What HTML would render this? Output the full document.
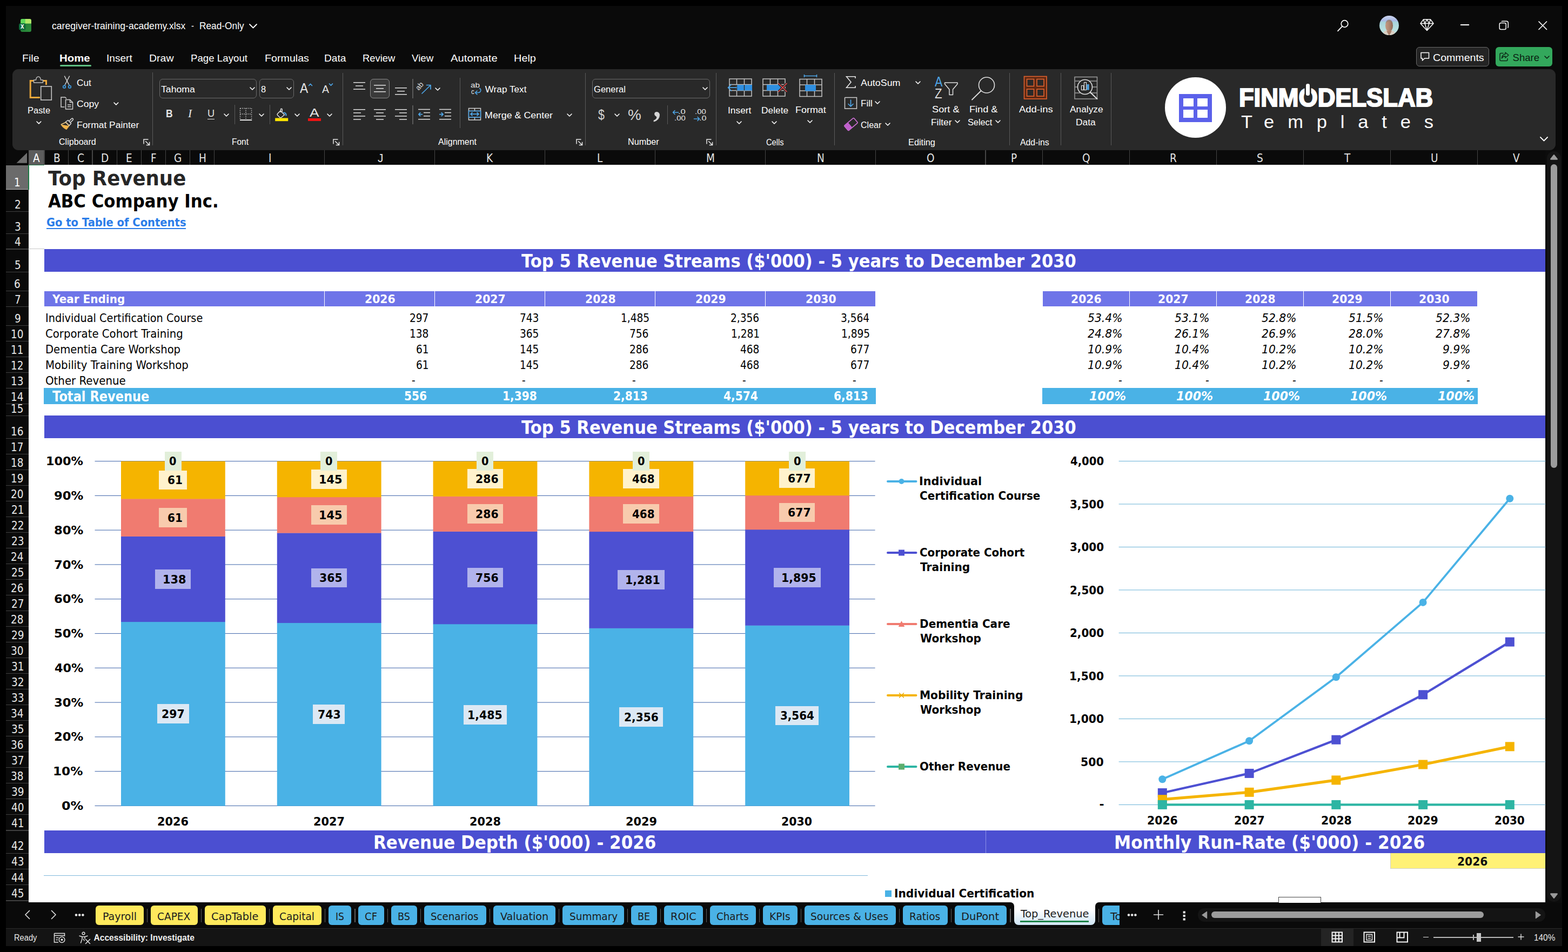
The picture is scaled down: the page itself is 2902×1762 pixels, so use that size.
<!DOCTYPE html>
<html lang="en"><head><meta charset="utf-8"><title>caregiver-training-academy.xlsx - Excel</title>
<style>
html,body{margin:0;padding:0;background:#000;}
body{width:2902px;height:1762px;position:relative;font-family:"Liberation Sans",sans-serif;}
#app div,#app svg,#app span.t{position:absolute;}
#app{position:absolute;left:0;top:0;width:2902px;height:1762px;overflow:hidden;}
span.t{white-space:pre;line-height:1;transform-origin:0 0;display:block;}
span.tah{font-family:"DejaVu Sans Condensed","DejaVu Sans","Liberation Sans",sans-serif;}
span.serif{font-family:"Liberation Serif",serif;}
span.tahb{font-family:"DejaVu Sans","Liberation Sans",sans-serif;}
</style></head>
<body><div id="app">
<div style="left:11px;top:11px;width:2880px;height:1740px;background:#0a0a0a;"></div>
<svg style="left:34px;top:34px;" width="26" height="26" viewBox="0 0 26 26">
<defs><linearGradient id="xg" x1="0" y1="0" x2="1" y2="1"><stop offset="0" stop-color="#1c7a30"/><stop offset="1" stop-color="#2f8f3e"/></linearGradient>
<clipPath id="xc"><rect x="4.1" y="1" width="19.8" height="24" rx="3"/></clipPath></defs>
<g clip-path="url(#xc)"><rect x="4" y="1" width="20" height="24" fill="url(#xg)"/>
<rect x="4" y="1" width="9" height="8.6" fill="#5ed85a"/><rect x="12.8" y="1" width="11.2" height="8.6" fill="#b4e869"/></g>
<rect x="1" y="9.2" width="12.6" height="12.6" rx="3" fill="#0e6b3d"/></svg>
<span class="t" style="left:38.40px;top:41.00px;font-size:14.2px;color:#fff;font-weight:bold;transform:scaleX(0.8250);">x</span>
<span class="t" style="left:96.00px;top:40.00px;font-size:17.8px;color:#fff;transform:scaleX(0.9904);">caregiver-training-academy.xlsx</span>
<span class="t" style="left:354.20px;top:40.00px;font-size:17.8px;color:#fff;transform:scaleX(0.8333);">-</span>
<span class="t" style="left:369.33px;top:40.00px;font-size:17.8px;color:#fff;transform:scaleX(0.9727);">Read-Only</span>
<svg style="left:459.5px;top:43.25px;" width="17" height="10.5" viewBox="0 0 17 10.5"><path d="M2 2 L8.5 8.5 L15 2" fill="none" stroke="#fff" stroke-width="1.8" stroke-linecap="round" stroke-linejoin="round"/></svg>
<svg style="left:2473px;top:34px;" width="26" height="26" viewBox="0 0 26 26"><circle cx="15.5" cy="10" r="6.3" fill="none" stroke="#fff" stroke-width="1.7"/><path d="M11 14.8L3 23.3" stroke="#fff" stroke-width="1.8" stroke-linecap="round"/></svg>
<svg style="left:2552px;top:28px;" width="38" height="38" viewBox="0 0 38 38"><defs><clipPath id="av"><circle cx="19" cy="19" r="18"/></clipPath>
<linearGradient id="sky" x1="0" y1="0" x2="0" y2="1"><stop offset="0" stop-color="#cfd6ee"/><stop offset="0.28" stop-color="#a9b9e6"/><stop offset="0.33" stop-color="#a7d3dc"/><stop offset="1" stop-color="#c4e8e2"/></linearGradient>
<linearGradient id="fc" x1="0" y1="0" x2="1" y2="0"><stop offset="0" stop-color="#c49a84"/><stop offset="0.5" stop-color="#b08670"/><stop offset="1" stop-color="#8c6a5a"/></linearGradient></defs>
<g clip-path="url(#av)"><rect width="38" height="38" fill="url(#sky)"/>
<path d="M6 38L10 30Q13 27.5 19 27.5Q25 27.5 28 30L32 38Z" fill="#d9d0c4"/>
<path d="M14 29L19 38L24 29Q19 31 14 29Z" fill="#a8806c"/>
<ellipse cx="19" cy="19.5" rx="7" ry="10.8" fill="url(#fc)"/>
<path d="M12.3 16Q13 8.2 19 8.2Q25 8.2 25.7 16Q23 11.5 19 11.5Q15 11.5 12.3 16Z" fill="#8a7f7c" opacity="0.55"/></g></svg>
<svg style="left:2627px;top:34px;" width="28" height="25" viewBox="0 0 28 25"><path d="M7.5 2H20.5L26 9.5L14 22.5L2 9.5Z M2 9.5H26 M10 9.5L14 22 M18 9.5L14 22 M7.5 2L10 9.5L14 2L18 9.5L20.5 2" fill="none" stroke="#fff" stroke-width="1.5" stroke-linejoin="round"/></svg>
<div style="left:2703px;top:45.3px;width:16px;height:1.6px;background:#fff;"></div>
<svg style="left:2773px;top:37px;" width="21" height="21" viewBox="0 0 21 21"><rect x="2.2" y="5.5" width="12" height="12" rx="2.5" fill="none" stroke="#fff" stroke-width="1.5"/><path d="M6 3.2Q6.5 2.2 8 2.2H15Q18.3 2.2 18.3 5.5V12.5Q18.3 14 17.3 14.5" fill="none" stroke="#fff" stroke-width="1.5"/></svg>
<svg style="left:2845px;top:37px;" width="20" height="20" viewBox="0 0 20 20"><path d="M3 3L17.5 17.5M17.5 3L3 17.5" stroke="#fff" stroke-width="1.7" stroke-linecap="round"/></svg>
<span class="t" style="left:40.97px;top:98.00px;font-size:19px;color:#fff;transform:scaleX(1.0328);">File</span>
<span class="t" style="left:197.49px;top:98.00px;font-size:19px;color:#fff;transform:scaleX(1.0055);">Insert</span>
<span class="t" style="left:276.37px;top:98.00px;font-size:19px;color:#fff;transform:scaleX(1.0272);">Draw</span>
<span class="t" style="left:352.52px;top:98.00px;font-size:19px;color:#fff;transform:scaleX(0.9838);">Page Layout</span>
<span class="t" style="left:489.97px;top:98.00px;font-size:19px;color:#fff;transform:scaleX(1.0350);">Formulas</span>
<span class="t" style="left:599.59px;top:98.00px;font-size:19px;color:#fff;transform:scaleX(1.0059);">Data</span>
<span class="t" style="left:670.73px;top:98.00px;font-size:19px;color:#fff;transform:scaleX(0.9679);">Review</span>
<span class="t" style="left:762.20px;top:98.00px;font-size:19px;color:#fff;transform:scaleX(0.9874);">View</span>
<span class="t" style="left:834.40px;top:98.00px;font-size:19px;color:#fff;transform:scaleX(1.0661);">Automate</span>
<span class="t" style="left:950.65px;top:98.00px;font-size:19px;color:#fff;transform:scaleX(1.0477);">Help</span>
<span class="t" style="left:110.33px;top:98.00px;font-size:19px;color:#fff;font-weight:bold;transform:scaleX(1.0738);">Home</span>
<div style="left:111px;top:119.7px;width:58px;height:3.4px;background:#5fbf82;border-radius:2px;"></div>
<div style="left:2621px;top:87px;width:135px;height:35.8px;background:#242424;border:1.3px solid #6a6a6a;border-radius:6px;box-sizing:border-box;"></div>
<svg style="left:2627px;top:95px;" width="22" height="20" viewBox="0 0 22 20"><path d="M3 2.5H17.5V13H9.5L5.5 17V13H3Z" fill="none" stroke="#fff" stroke-width="1.5" stroke-linejoin="round"/></svg>
<span class="t" style="left:2652.30px;top:98.00px;font-size:18.5px;color:#fff;transform:scaleX(1.0584);">Comments</span>
<div style="left:2768.2px;top:87px;width:105px;height:35.8px;background:#33a85c;border-radius:6px;"></div>
<svg style="left:2773px;top:94px;" width="22" height="22" viewBox="0 0 22 22"><path d="M9 4.5H5Q3 4.5 3 6.5V16.5Q3 18.5 5 18.5H15Q17 18.5 17 16.5V14.5" fill="none" stroke="#0d2b17" stroke-width="1.5" stroke-linecap="round"/><path d="M13 3L19 8L13 13V10Q8.5 10 6.5 14Q7 7 13 6Z" fill="none" stroke="#0d2b17" stroke-width="1.5" stroke-linejoin="round"/></svg>
<span class="t" style="left:2799.60px;top:98.00px;font-size:18.5px;color:#0a1f11;">Share</span>
<svg style="left:2856.5px;top:101.5px;" width="12" height="8" viewBox="0 0 12 8"><path d="M2 2 L6 6 L10 2" fill="none" stroke="#0a1f11" stroke-width="1.6" stroke-linecap="round" stroke-linejoin="round"/></svg>
<div style="left:23.3px;top:128px;width:2855.7px;height:149.8px;background:#292929;border-radius:11px;"></div>
<svg style="left:53px;top:143px;overflow:visible;" width="45" height="45" viewBox="0 0 45 45">
<path d="M10 6.5H3.2V37.5H21" fill="none" stroke="#eaa73a" stroke-width="3"/>
<path d="M26 6.5H32.5V14" fill="none" stroke="#eaa73a" stroke-width="3"/>
<path d="M9.5 10V5H13.6Q14 -1 18 -1Q22 -1 22.4 5H26.5V10Z" fill="#292929" stroke="#bdbdbd" stroke-width="1.4" stroke-linejoin="round"/>
<rect x="22.7" y="17" width="19.6" height="25" fill="#292929" stroke="#c8c8c8" stroke-width="1.6"/></svg>
<span class="t" style="left:50.74px;top:196.00px;font-size:17.2px;color:#fff;transform:scaleX(0.9577);">Paste</span>
<svg style="left:65.6px;top:222.55px;" width="11.8" height="7.9" viewBox="0 0 11.8 7.9"><path d="M2 2 L5.9 5.9 L9.8 2" fill="none" stroke="#fff" stroke-width="1.6" stroke-linecap="round" stroke-linejoin="round"/></svg>
<svg style="left:113px;top:139px;" width="22" height="27" viewBox="0 0 22 27"><path d="M6.5 2L14.5 17.5 M15.5 2L7.5 17.5" stroke="#e0e0e0" stroke-width="1.4" fill="none" stroke-linecap="round"/>
<circle cx="6" cy="21.7" r="2.3" fill="none" stroke="#3f9be0" stroke-width="1.7"/><circle cx="16" cy="21.7" r="2.3" fill="none" stroke="#3f9be0" stroke-width="1.7"/>
<path d="M7.5 17.5L6.6 19.2M14.5 17.5L15.4 19.2" stroke="#4ea6e8" stroke-width="1.4"/></svg>
<span class="t" style="left:142.00px;top:145.00px;font-size:17.2px;color:#fff;">Cut</span>
<svg style="left:111px;top:178px;" width="26" height="26" viewBox="0 0 26 26"><path d="M8.5 20H2V2H9.5L12 4.5" fill="none" stroke="#d0d0d0" stroke-width="1.5"/>
<path d="M10.5 6.5H18.5L23.5 11.5V24H10.5Z" fill="#292929" stroke="#d0d0d0" stroke-width="1.5" stroke-linejoin="round"/>
<path d="M18.5 6.5V11.5H23.5 M14 16H20.5 M14 19.5H20.5" fill="none" stroke="#d0d0d0" stroke-width="1.4"/></svg>
<span class="t" style="left:142.00px;top:184.00px;font-size:17.2px;color:#fff;transform:scaleX(1.0264);">Copy</span>
<svg style="left:209.4px;top:187.65px;" width="11.8" height="7.9" viewBox="0 0 11.8 7.9"><path d="M2 2 L5.9 5.9 L9.8 2" fill="none" stroke="#fff" stroke-width="1.6" stroke-linecap="round" stroke-linejoin="round"/></svg>
<svg style="left:111px;top:217px;" width="26" height="24" viewBox="0 0 26 24"><path d="M17 7L21.5 2.5Q23 1.5 24 2.7Q25 4 23.8 5.2L19.5 9.5" fill="none" stroke="#e0e0e0" stroke-width="1.5"/>
<path d="M10.5 8.5L15 5.5L20.5 11.5L17 15.5Z" fill="none" stroke="#e0e0e0" stroke-width="1.5" stroke-linejoin="round"/>
<path d="M2 13.5L10.5 9.5L17 16L12 22.5Q6 20 2 13.5Z" fill="#f0b44a" stroke="#f0b44a" stroke-width="1.2" stroke-linejoin="round"/>
<path d="M2 13.5L10.5 9.5L17 16" fill="#292929" stroke="#e8c88a" stroke-width="1.4" stroke-linejoin="round"/></svg>
<span class="t" style="left:141.69px;top:223.00px;font-size:17.2px;color:#fff;transform:scaleX(1.0147);">Format Painter</span>
<span class="t" style="left:109.20px;top:254.00px;font-size:16.2px;color:#fff;transform:scaleX(0.9929);">Clipboard</span>
<svg style="left:264.8px;top:256.5px;" width="13" height="13" viewBox="0 0 13 13"><path d="M1 9.5V1H9.5 M4.2 4.2L11 11 M5.8 11.6H11.6V5.8" fill="none" stroke="#e8e8e8" stroke-width="1.5"/></svg>
<div style="left:282px;top:134px;width:1.3px;height:134.7px;background:#5a5a5a;"></div>
<div style="left:295.3px;top:145.9px;width:180.1px;height:35.9px;background:#292929;border:1.3px solid #6b6b6b;border-radius:6px;box-sizing:border-box;"></div>
<span class="t" style="left:298.30px;top:157.00px;font-size:17.2px;color:#fff;transform:scaleX(1.0278);">Tahoma</span>
<svg style="left:461px;top:160px;" width="12" height="8" viewBox="0 0 12 8"><path d="M2 2 L6 6 L10 2" fill="none" stroke="#fff" stroke-width="1.6" stroke-linecap="round" stroke-linejoin="round"/></svg>
<div style="left:479.7px;top:145.9px;width:64.1px;height:35.9px;background:#292929;border:1.3px solid #6b6b6b;border-radius:6px;box-sizing:border-box;"></div>
<span class="t" style="left:483.20px;top:157.00px;font-size:17.2px;color:#fff;transform:scaleX(0.9556);">8</span>
<svg style="left:529px;top:160px;" width="12" height="8" viewBox="0 0 12 8"><path d="M2 2 L6 6 L10 2" fill="none" stroke="#fff" stroke-width="1.6" stroke-linecap="round" stroke-linejoin="round"/></svg>
<span class="t" style="left:555.00px;top:151.00px;font-size:25px;color:#e6e6e6;transform:scaleX(0.9118);">A</span>
<svg style="left:569.5px;top:152.5px;" width="10" height="8" viewBox="0 0 10 8"><path d="M1.5 5.5L4.5 2.3L7.5 5.5" fill="none" stroke="#4ea6e8" stroke-width="1.7" stroke-linecap="round" stroke-linejoin="round"/></svg>
<span class="t" style="left:596.00px;top:154.00px;font-size:21px;color:#e6e6e6;transform:scaleX(0.9286);">A</span>
<svg style="left:608px;top:153px;" width="10" height="8" viewBox="0 0 10 8"><path d="M1.5 2L4.5 5.2L7.5 2" fill="none" stroke="#4ea6e8" stroke-width="1.7" stroke-linecap="round" stroke-linejoin="round"/></svg>
<span class="t" style="left:306.72px;top:200.00px;font-size:20px;color:#e6e6e6;font-weight:bold;transform:scaleX(0.8769);">B</span>
<span class="t serif" style="left:348.06px;top:200.00px;font-size:20.5px;color:#e6e6e6;font-style:italic;transform:scaleX(1.0556);">I</span>
<span class="t" style="left:383.54px;top:200.00px;font-size:19px;color:#e6e6e6;transform:scaleX(0.9583);">U</span>
<div style="left:383.5px;top:219.6px;width:13.5px;height:1.5px;background:#e6e6e6;"></div>
<svg style="left:413.3px;top:209.2px;" width="12" height="8" viewBox="0 0 12 8"><path d="M2 2 L6 6 L10 2" fill="none" stroke="#fff" stroke-width="1.6" stroke-linecap="round" stroke-linejoin="round"/></svg>
<div style="left:433.8px;top:194px;width:1.3px;height:36px;background:#5a5a5a;"></div>
<svg style="left:443px;top:199px;" width="25" height="25" viewBox="0 0 25 25"><path d="M1.5 1.5H22.5 M1.5 1.5V22 M22.5 1.5V22 M12 1.5V22 M1.5 12H22.5" fill="none" stroke="#c8c8c8" stroke-width="1.5" stroke-dasharray="1.6 1.9"/>
<path d="M1 23.2H23.2" stroke="#fff" stroke-width="1.8"/></svg>
<svg style="left:478.3px;top:209.2px;" width="12" height="8" viewBox="0 0 12 8"><path d="M2 2 L6 6 L10 2" fill="none" stroke="#fff" stroke-width="1.6" stroke-linecap="round" stroke-linejoin="round"/></svg>
<div style="left:498.7px;top:194px;width:1.3px;height:36px;background:#5a5a5a;"></div>
<svg style="left:508px;top:199px;" width="27" height="26" viewBox="0 0 27 26"><path d="M11 6L18.5 13.5L12.5 18.5Q11 19.3 9.8 18.3L5.5 14Q4.6 12.8 5.6 11.6Z" fill="none" stroke="#e0e0e0" stroke-width="1.5" stroke-linejoin="round"/>
<path d="M11.5 9V3Q12.8 1.5 14.2 3V8" fill="none" stroke="#e0e0e0" stroke-width="1.4"/>
<path d="M17 9.5Q21.5 9.5 21.5 14.5" fill="none" stroke="#4ea6e8" stroke-width="2.2" stroke-linecap="round"/>
<rect x="1.2" y="19.5" width="24" height="5.7" fill="#ffe600"/></svg>
<svg style="left:543.5px;top:209.2px;" width="12" height="8" viewBox="0 0 12 8"><path d="M2 2 L6 6 L10 2" fill="none" stroke="#fff" stroke-width="1.6" stroke-linecap="round" stroke-linejoin="round"/></svg>
<span class="t" style="left:573.20px;top:198.00px;font-size:22px;color:#e6e6e6;transform:scaleX(1.2000);">A</span>
<div style="left:570px;top:218.5px;width:24px;height:5.7px;background:#f01414;"></div>
<svg style="left:604.3px;top:209.2px;" width="12" height="8" viewBox="0 0 12 8"><path d="M2 2 L6 6 L10 2" fill="none" stroke="#fff" stroke-width="1.6" stroke-linecap="round" stroke-linejoin="round"/></svg>
<span class="t" style="left:429.04px;top:254.00px;font-size:16.2px;color:#fff;transform:scaleX(0.9594);">Font</span>
<svg style="left:616px;top:256.5px;" width="13" height="13" viewBox="0 0 13 13"><path d="M1 9.5V1H9.5 M4.2 4.2L11 11 M5.8 11.6H11.6V5.8" fill="none" stroke="#e8e8e8" stroke-width="1.5"/></svg>
<div style="left:633.5px;top:135px;width:1.3px;height:133.7px;background:#5a5a5a;"></div>
<svg style="left:653.8px;top:152.1px;" width="22" height="20.6" viewBox="0 0 22 20.6"><rect x="0" y="0" width="22" height="1.5" fill="#e0e0e0"/><rect x="4" y="6.2" width="14" height="1.5" fill="#e0e0e0"/><rect x="0" y="12.4" width="22" height="1.5" fill="#e0e0e0"/></svg>
<div style="left:685px;top:146px;width:36px;height:35.5px;background:#3a3a3a;border:1.3px solid #8a8a8a;border-radius:6px;box-sizing:border-box;"></div>
<svg style="left:692.3px;top:156.8px;" width="22" height="20" viewBox="0 0 22 20"><rect x="0" y="0" width="22" height="1.5" fill="#e0e0e0"/><rect x="4" y="6" width="14" height="1.5" fill="#e0e0e0"/><rect x="0" y="12" width="22" height="1.5" fill="#e0e0e0"/></svg>
<svg style="left:730.8px;top:162.4px;" width="22" height="20" viewBox="0 0 22 20"><rect x="0" y="0" width="22" height="1.5" fill="#e0e0e0"/><rect x="4" y="6" width="14" height="1.5" fill="#e0e0e0"/><rect x="0" y="12" width="22" height="1.5" fill="#e0e0e0"/></svg>
<div style="left:763.3px;top:146px;width:1.3px;height:35.5px;background:#5a5a5a;"></div>
<svg style="left:771px;top:150px;" width="28" height="26" viewBox="0 0 28 26"><path d="M10 23L25.5 8 M18.5 7.5H26V15" fill="none" stroke="#4ea6e8" stroke-width="1.7" stroke-linecap="round" stroke-linejoin="round"/></svg>
<span class="t" style="left:774.50px;top:157.00px;font-size:13.5px;color:#e0e0e0;transform-origin:0 11.0px;transform:rotate(-50deg) scaleX(0.9994);">ab</span>
<svg style="left:804px;top:160.5px;" width="12" height="8" viewBox="0 0 12 8"><path d="M2 2 L6 6 L10 2" fill="none" stroke="#fff" stroke-width="1.6" stroke-linecap="round" stroke-linejoin="round"/></svg>
<svg style="left:653.8px;top:201.8px;" width="22" height="26.4" viewBox="0 0 22 26.4"><rect x="0" y="0" width="22" height="1.5" fill="#e0e0e0"/><rect x="0" y="6.1" width="14" height="1.5" fill="#e0e0e0"/><rect x="0" y="12.2" width="22" height="1.5" fill="#e0e0e0"/><rect x="0" y="18.3" width="14" height="1.5" fill="#e0e0e0"/></svg>
<svg style="left:692.3px;top:201.8px;" width="22" height="26.4" viewBox="0 0 22 26.4"><rect x="0" y="0" width="22" height="1.5" fill="#e0e0e0"/><rect x="4" y="6.1" width="14" height="1.5" fill="#e0e0e0"/><rect x="0" y="12.2" width="22" height="1.5" fill="#e0e0e0"/><rect x="4" y="18.3" width="14" height="1.5" fill="#e0e0e0"/></svg>
<svg style="left:730.8px;top:201.8px;" width="22" height="26.4" viewBox="0 0 22 26.4"><rect x="0" y="0" width="22" height="1.5" fill="#e0e0e0"/><rect x="8" y="6.1" width="14" height="1.5" fill="#e0e0e0"/><rect x="0" y="12.2" width="22" height="1.5" fill="#e0e0e0"/><rect x="8" y="18.3" width="14" height="1.5" fill="#e0e0e0"/></svg>
<div style="left:763.3px;top:194.5px;width:1.3px;height:35px;background:#5a5a5a;"></div>
<svg style="left:773.5px;top:201px;" width="23" height="22" viewBox="0 0 23 22"><path d="M0 1.5H22 M10 7.6H22 M10 13.7H22 M0 19.8H22" stroke="#e0e0e0" stroke-width="1.5"/><path d="M7.5 10.6H1M3.8 7.6L0.8 10.6L3.8 13.6" fill="none" stroke="#4ea6e8" stroke-width="1.6" stroke-linecap="round" stroke-linejoin="round"/></svg>
<svg style="left:812.5px;top:201px;" width="23" height="22" viewBox="0 0 23 22"><path d="M0 1.5H22 M10 7.6H22 M10 13.7H22 M0 19.8H22" stroke="#e0e0e0" stroke-width="1.5"/><path d="M0.5 10.6H7M4.2 7.6L7.2 10.6L4.2 13.6" fill="none" stroke="#4ea6e8" stroke-width="1.6" stroke-linecap="round" stroke-linejoin="round"/></svg>
<div style="left:851px;top:144px;width:1.3px;height:93.4px;background:#5a5a5a;"></div>
<span class="t" style="left:871.00px;top:151.00px;font-size:13.5px;color:#e8e8e8;transform:scaleX(1.1373);">ab</span>
<span class="t" style="left:871.50px;top:163.00px;font-size:13.5px;color:#e8e8e8;transform:scaleX(0.8571);">c</span>
<svg style="left:877px;top:162px;" width="16" height="15" viewBox="0 0 16 15"><path d="M10.5 1.5Q13.5 3 12.5 6.5Q11.5 9.5 7.5 9.5H3 M6 6.2L2.5 9.5L6 12.8" fill="none" stroke="#4ea6e8" stroke-width="1.6" stroke-linecap="round" stroke-linejoin="round"/></svg>
<span class="t" style="left:897.70px;top:157.00px;font-size:17.2px;color:#fff;">Wrap Text</span>
<svg style="left:865.5px;top:199px;" width="26" height="25" viewBox="0 0 26 25"><path d="M1.5 1.5H23.5V23H1.5Z M1.5 6.5H23.5 M1.5 18H23.5 M12.5 1.5V6.5 M12.5 18V23" fill="none" stroke="#d0d0d0" stroke-width="1.5"/>
<rect x="1.5" y="6.5" width="22" height="11.5" fill="#292929" stroke="#4ea6e8" stroke-width="1.6"/>
<path d="M5 12.2H20 M8 9.4L5 12.2L8 15 M17 9.4L20 12.2L17 15" fill="none" stroke="#4ea6e8" stroke-width="1.7" stroke-linecap="round" stroke-linejoin="round"/></svg>
<span class="t" style="left:896.66px;top:205.00px;font-size:17.2px;color:#fff;transform:scaleX(1.0390);">Merge &amp; Center</span>
<svg style="left:1048px;top:209.2px;" width="12" height="8" viewBox="0 0 12 8"><path d="M2 2 L6 6 L10 2" fill="none" stroke="#fff" stroke-width="1.6" stroke-linecap="round" stroke-linejoin="round"/></svg>
<span class="t" style="left:810.50px;top:254.00px;font-size:16.2px;color:#fff;transform:scaleX(0.9864);">Alignment</span>
<svg style="left:1065.7px;top:256.5px;" width="13" height="13" viewBox="0 0 13 13"><path d="M1 9.5V1H9.5 M4.2 4.2L11 11 M5.8 11.6H11.6V5.8" fill="none" stroke="#e8e8e8" stroke-width="1.5"/></svg>
<div style="left:1082.7px;top:135px;width:1.3px;height:133.7px;background:#5a5a5a;"></div>
<div style="left:1096.2px;top:145.9px;width:217.5px;height:35.9px;background:#292929;border:1.3px solid #6b6b6b;border-radius:6px;box-sizing:border-box;"></div>
<span class="t" style="left:1099.40px;top:157.00px;font-size:17.2px;color:#fff;transform:scaleX(0.9631);">General</span>
<svg style="left:1299px;top:160px;" width="12" height="8" viewBox="0 0 12 8"><path d="M2 2 L6 6 L10 2" fill="none" stroke="#fff" stroke-width="1.6" stroke-linecap="round" stroke-linejoin="round"/></svg>
<span class="t" style="left:1107.20px;top:199.00px;font-size:26.5px;color:#d6d6d6;transform:scaleX(0.8067);">$</span>
<svg style="left:1135.5px;top:209.2px;" width="12" height="8" viewBox="0 0 12 8"><path d="M2 2 L6 6 L10 2" fill="none" stroke="#fff" stroke-width="1.6" stroke-linecap="round" stroke-linejoin="round"/></svg>
<span class="t" style="left:1162.40px;top:199.00px;font-size:28px;color:#d6d6d6;transform:scaleX(0.9957);">%</span>
<span class="t serif" style="left:1208.60px;top:164.00px;font-size:62px;color:#d6d6d6;font-weight:bold;transform:scaleX(0.9143);">,</span>
<div style="left:1234.9px;top:194.5px;width:1.3px;height:35px;background:#5a5a5a;"></div>
<span class="t" style="left:1254.77px;top:200.00px;font-size:13.5px;color:#e6e6e6;transform:scaleX(1.2307);">.0</span>
<span class="t" style="left:1247.90px;top:212.00px;font-size:13.5px;color:#e6e6e6;transform:scaleX(1.1009);">.00</span>
<svg style="left:1244px;top:202.5px;" width="13" height="10" viewBox="0 0 13 10"><path d="M11.5 5H1.5M5 1.5L1.5 5L5 8.5" fill="none" stroke="#4ea6e8" stroke-width="1.6" stroke-linecap="round" stroke-linejoin="round"/></svg>
<span class="t" style="left:1286.40px;top:200.00px;font-size:13.5px;color:#e6e6e6;transform:scaleX(1.1009);">.00</span>
<span class="t" style="left:1294.30px;top:212.00px;font-size:13.5px;color:#e6e6e6;transform:scaleX(1.1999);">.0</span>
<svg style="left:1283px;top:214.5px;" width="13" height="10" viewBox="0 0 13 10"><path d="M1.5 5H11.5M8 1.5L11.5 5L8 8.5" fill="none" stroke="#4ea6e8" stroke-width="1.6" stroke-linecap="round" stroke-linejoin="round"/></svg>
<span class="t" style="left:1162.00px;top:254.00px;font-size:16.2px;color:#fff;">Number</span>
<svg style="left:1307px;top:256.5px;" width="13" height="13" viewBox="0 0 13 13"><path d="M1 9.5V1H9.5 M4.2 4.2L11 11 M5.8 11.6H11.6V5.8" fill="none" stroke="#e8e8e8" stroke-width="1.5"/></svg>
<div style="left:1325px;top:135px;width:1.3px;height:133.7px;background:#5a5a5a;"></div>
<svg style="left:1346px;top:144.5px;" width="48" height="35" viewBox="0 0 48 35"><g transform="translate(3,0)"><path d="M1 1H42V33H1Z M1 11.5H42 M1 22.5H42 M14.5 1V33 M28.5 1V33" fill="none" stroke="#c4c4c4" stroke-width="1.5"/></g>
<rect x="17" y="12" width="29" height="10.5" fill="#2f8fe0"/><path d="M17.5 12V22.5M31.5 12V22.5" stroke="#292929" stroke-width="1.3"/>
<path d="M17 17.2H2 M7.5 11.5L1.5 17.2L7.5 23" fill="none" stroke="#4ea6e8" stroke-width="1.7" stroke-linecap="round" stroke-linejoin="round"/></svg>
<span class="t" style="left:1346.79px;top:196.00px;font-size:17.2px;color:#fff;transform:scaleX(1.0092);">Insert</span>
<svg style="left:1362.3px;top:222.5px;" width="12" height="8" viewBox="0 0 12 8"><path d="M2 2 L6 6 L10 2" fill="none" stroke="#fff" stroke-width="1.6" stroke-linecap="round" stroke-linejoin="round"/></svg>
<svg style="left:1411px;top:144.5px;" width="48" height="35" viewBox="0 0 48 35"><g transform="translate(0,0)"><path d="M1 1H42V33H1Z M1 11.5H42 M1 22.5H42 M14.5 1V33 M28.5 1V33" fill="none" stroke="#c4c4c4" stroke-width="1.5"/></g>
<rect x="8" y="12" width="26" height="10.5" fill="#2f8fe0"/>
<path d="M30 9.5L45 24.5M45 9.5L30 24.5" stroke="#292929" stroke-width="4.5"/><path d="M30 9.5L45 24.5M45 9.5L30 24.5" stroke="#e8484a" stroke-width="1.7" stroke-linecap="round"/></svg>
<span class="t" style="left:1408.99px;top:196.00px;font-size:17.2px;color:#fff;transform:scaleX(1.0099);">Delete</span>
<svg style="left:1427.3px;top:222.5px;" width="12" height="8" viewBox="0 0 12 8"><path d="M2 2 L6 6 L10 2" fill="none" stroke="#fff" stroke-width="1.6" stroke-linecap="round" stroke-linejoin="round"/></svg>
<svg style="left:1478px;top:137px;" width="46" height="43" viewBox="0 0 46 43"><g transform="translate(1,8.5)"><path d="M1 1H42V33H1Z M1 11.5H42 M1 22.5H42 M14.5 1V33 M28.5 1V33" fill="none" stroke="#c4c4c4" stroke-width="1.5"/></g>
<rect x="12" y="20" width="20" height="11.5" fill="#2f8fe0"/>
<path d="M10.5 3.5H33.5 M10.5 1V6 M33.5 1V6" stroke="#4ea6e8" stroke-width="1.6" fill="none"/></svg>
<span class="t" style="left:1471.76px;top:195.00px;font-size:17.2px;color:#fff;transform:scaleX(1.0437);">Format</span>
<svg style="left:1493.2px;top:221px;" width="12" height="8" viewBox="0 0 12 8"><path d="M2 2 L6 6 L10 2" fill="none" stroke="#fff" stroke-width="1.6" stroke-linecap="round" stroke-linejoin="round"/></svg>
<span class="t" style="left:1418.00px;top:255.00px;font-size:16.2px;color:#fff;transform:scaleX(0.9057);">Cells</span>
<div style="left:1544.1px;top:135px;width:1.3px;height:133.7px;background:#5a5a5a;"></div>
<svg style="left:1564px;top:140px;" width="22" height="25" viewBox="0 0 22 25"><path d="M19 5V1.8H2.5L11 12L2.5 22.3H19V19" fill="none" stroke="#e6e6e6" stroke-width="1.6" stroke-linejoin="miter"/></svg>
<span class="t" style="left:1593.30px;top:145.00px;font-size:17.2px;color:#fff;transform:scaleX(1.0387);">AutoSum</span>
<svg style="left:1693px;top:149px;" width="12" height="8" viewBox="0 0 12 8"><path d="M2 2 L6 6 L10 2" fill="none" stroke="#fff" stroke-width="1.6" stroke-linecap="round" stroke-linejoin="round"/></svg>
<svg style="left:1562px;top:179px;" width="26" height="24" viewBox="0 0 26 24"><path d="M1.5 8V22H23.5V8 M1.5 1.5H23.5V22" fill="none" stroke="#d0d0d0" stroke-width="1.5"/><path d="M1.5 1.5V8" stroke="#d0d0d0" stroke-width="1.5"/><path d="M12.5 6V17.5M8 13.5L12.5 18L17 13.5" fill="none" stroke="#4ea6e8" stroke-width="1.7" stroke-linecap="round" stroke-linejoin="round"/></svg>
<span class="t" style="left:1592.71px;top:183.00px;font-size:17.2px;color:#fff;transform:scaleX(0.9883);">Fill</span>
<svg style="left:1618.3px;top:186.4px;" width="12" height="8" viewBox="0 0 12 8"><path d="M2 2 L6 6 L10 2" fill="none" stroke="#fff" stroke-width="1.6" stroke-linecap="round" stroke-linejoin="round"/></svg>
<svg style="left:1562px;top:217px;" width="26" height="26" viewBox="0 0 26 26"><g transform="rotate(-40 13 13)"><rect x="1.5" y="7" width="23" height="12" rx="1.5" fill="none" stroke="#d070d8" stroke-width="1.6"/><rect x="1.5" y="7" width="9.5" height="12" rx="1.5" fill="#c060cc"/></g></svg>
<span class="t" style="left:1593.30px;top:223.00px;font-size:17.2px;color:#fff;transform:scaleX(0.9335);">Clear</span>
<svg style="left:1636.6px;top:226.2px;" width="12" height="8" viewBox="0 0 12 8"><path d="M2 2 L6 6 L10 2" fill="none" stroke="#fff" stroke-width="1.6" stroke-linecap="round" stroke-linejoin="round"/></svg>
<span class="t" style="left:1730.20px;top:139.00px;font-size:25px;color:#4ea6e8;transform:scaleX(0.8706);">A</span>
<span class="t" style="left:1730.40px;top:161.00px;font-size:25px;color:#dcdcdc;transform:scaleX(0.8933);">Z</span>
<svg style="left:1747px;top:150.5px;" width="27" height="27" viewBox="0 0 27 27"><path d="M1.5 2H25V4.5L16.5 14.5V24.5H10V14.5L1.5 4.5Z" fill="none" stroke="#e0e0e0" stroke-width="1.5" stroke-linejoin="round"/></svg>
<span class="t" style="left:1725.20px;top:194.00px;font-size:17.2px;color:#fff;transform:scaleX(1.0601);">Sort &amp;</span>
<span class="t" style="left:1723.39px;top:218.00px;font-size:17.2px;color:#fff;transform:scaleX(1.0088);">Filter</span>
<svg style="left:1766.2px;top:221.3px;" width="12" height="8" viewBox="0 0 12 8"><path d="M2 2 L6 6 L10 2" fill="none" stroke="#fff" stroke-width="1.6" stroke-linecap="round" stroke-linejoin="round"/></svg>
<svg style="left:1797px;top:140px;" width="48" height="47" viewBox="0 0 48 47"><circle cx="29" cy="17.5" r="14.5" fill="none" stroke="#e0e0e0" stroke-width="1.6"/><path d="M18.7 28L2 44.5" stroke="#e0e0e0" stroke-width="1.8" stroke-linecap="round"/></svg>
<span class="t" style="left:1794.45px;top:194.00px;font-size:17.2px;color:#fff;transform:scaleX(1.0547);">Find &amp;</span>
<span class="t" style="left:1790.60px;top:218.00px;font-size:17.2px;color:#fff;transform:scaleX(0.9460);">Select</span>
<svg style="left:1840.5px;top:221.3px;" width="12" height="8" viewBox="0 0 12 8"><path d="M2 2 L6 6 L10 2" fill="none" stroke="#fff" stroke-width="1.6" stroke-linecap="round" stroke-linejoin="round"/></svg>
<span class="t" style="left:1680.79px;top:255.00px;font-size:16.2px;color:#fff;transform:scaleX(1.0086);">Editing</span>
<div style="left:1868px;top:135px;width:1.3px;height:133.7px;background:#5a5a5a;"></div>
<svg style="left:1894px;top:140px;" width="45" height="45" viewBox="0 0 45 45"><rect x="1" y="1" width="42.5" height="42.5" fill="#5c2712"/><g fill="#292929" stroke="#d9602e" stroke-width="1.7"><rect x="1.5" y="1.5" width="41.5" height="41.5" fill="none"/><rect x="6.5" y="6.5" width="13" height="13"/><rect x="25" y="6.5" width="13" height="13"/><rect x="6.5" y="25" width="13" height="13"/><rect x="25" y="25" width="13" height="13"/></g></svg>
<span class="t" style="left:1885.60px;top:194.00px;font-size:17.2px;color:#fff;transform:scaleX(1.0748);">Add-ins</span>
<span class="t" style="left:1888.00px;top:255.00px;font-size:16.2px;color:#fff;transform:scaleX(0.9782);">Add-ins</span>
<div style="left:1962.7px;top:135px;width:1.3px;height:133.7px;background:#5a5a5a;"></div>
<svg style="left:1988px;top:140.5px;" width="45" height="44" viewBox="0 0 45 44"><path d="M1 1.5H42.5V42H1Z M1 9H42.5 M1 20H42.5 M1 31H42.5" fill="none" stroke="#9a9a9a" stroke-width="1.5"/>
<circle cx="20" cy="20" r="13.5" fill="#292929" stroke="#e0e0e0" stroke-width="1.6"/>
<rect x="13.5" y="17.5" width="4" height="8" fill="none" stroke="#e0e0e0" stroke-width="1.2"/><rect x="18.5" y="11.5" width="4" height="14" fill="none" stroke="#e0e0e0" stroke-width="1.2"/><rect x="23.5" y="15" width="4" height="10.5" fill="#4ea6e8"/>
<path d="M30 30L42.5 42" stroke="#e0e0e0" stroke-width="2" stroke-linecap="round"/></svg>
<span class="t" style="left:1980.00px;top:194.00px;font-size:17.2px;color:#fff;transform:scaleX(1.0068);">Analyze</span>
<span class="t" style="left:1991.29px;top:218.00px;font-size:17.2px;color:#fff;transform:scaleX(1.0127);">Data</span>
<div style="left:2056.1px;top:135px;width:1.3px;height:133.7px;background:#5a5a5a;"></div>
<div style="left:2156.2px;top:143.1px;width:112.6px;height:112.4px;background:#fff;border-radius:50%;"></div>
<div style="left:2181.8px;top:173.6px;width:61px;height:52.1px;background:#5b61ea;"></div>
<div style="left:2190px;top:181.8px;width:19.2px;height:14.8px;background:#fff;"></div>
<div style="left:2190px;top:203.4px;width:19.2px;height:14.8px;background:#fff;"></div>
<div style="left:2216.2px;top:181.8px;width:19.2px;height:14.8px;background:#fff;"></div>
<div style="left:2216.2px;top:203.4px;width:19.2px;height:14.8px;background:#fff;"></div>
<span class="t" style="left:2292.77px;top:157.00px;font-size:48px;color:#fff;font-weight:bold;-webkit-text-stroke:2.2px #fff;transform:scaleX(0.9420);">FINMODELSLAB</span>
<div style="left:2417.2px;top:155px;width:6.4px;height:21.5px;background:#fff;border-radius:3.2px;box-shadow:0 0 0 2.6px #292929;"></div>
<span class="t" style="left:2296.50px;top:208.00px;font-size:34px;color:#fff;letter-spacing:24.5px;transform:scaleX(1.0144);">Templates</span>
<svg style="left:2849px;top:252.25px;" width="17" height="10.5" viewBox="0 0 17 10.5"><path d="M2 2 L8.5 8.5 L15 2" fill="none" stroke="#fff" stroke-width="1.8" stroke-linecap="round" stroke-linejoin="round"/></svg>
<div style="left:53px;top:305.3px;width:2807.3px;height:1365.2px;background:#fff;"></div>
<div style="left:11px;top:278px;width:2849.3px;height:27.3px;background:#0a0a0a;"></div>
<div style="left:53.2px;top:278px;width:28.6px;height:27.3px;background:#5c5c5c;"></div>
<svg style="left:29px;top:281px;" width="22" height="22" viewBox="0 0 22 22"><path d="M21 1.8V20.8H1.5Z" fill="#6e6e6e"/></svg>
<div style="left:81.4px;top:278px;width:1.2px;height:27.3px;background:#454545;"></div>
<span class="t tah" style="left:61.45px;top:282.00px;font-size:21.62px;color:#fff;transform:scaleX(0.9500);">A</span>
<div style="left:125.9px;top:278px;width:1.2px;height:27.3px;background:#454545;"></div>
<span class="t tah" style="left:98.67px;top:282.00px;font-size:21.62px;color:#e4e4e4;transform:scaleX(0.9500);">B</span>
<div style="left:170.4px;top:278px;width:1.2px;height:27.3px;background:#454545;"></div>
<span class="t tah" style="left:142.70px;top:282.00px;font-size:21.62px;color:#e4e4e4;transform:scaleX(0.9500);">C</span>
<div style="left:215.8px;top:278px;width:1.2px;height:27.3px;background:#454545;"></div>
<span class="t tah" style="left:187.17px;top:282.00px;font-size:21.62px;color:#e4e4e4;transform:scaleX(0.9500);">D</span>
<div style="left:260.7px;top:278px;width:1.2px;height:27.3px;background:#454545;"></div>
<span class="t tah" style="left:233.28px;top:282.00px;font-size:21.62px;color:#e4e4e4;transform:scaleX(0.9500);">E</span>
<div style="left:305.8px;top:278px;width:1.2px;height:27.3px;background:#454545;"></div>
<span class="t tah" style="left:278.75px;top:282.00px;font-size:21.62px;color:#e4e4e4;transform:scaleX(0.9500);">F</span>
<div style="left:350.8px;top:278px;width:1.2px;height:27.3px;background:#454545;"></div>
<span class="t tah" style="left:322.38px;top:282.00px;font-size:21.62px;color:#e4e4e4;transform:scaleX(0.9500);">G</span>
<div style="left:395.9px;top:278px;width:1.2px;height:27.3px;background:#454545;"></div>
<span class="t tah" style="left:367.90px;top:282.00px;font-size:21.62px;color:#e4e4e4;transform:scaleX(0.9500);">H</span>
<div style="left:600px;top:278px;width:1.2px;height:27.3px;background:#454545;"></div>
<span class="t tah" style="left:496.78px;top:282.00px;font-size:21.62px;color:#e4e4e4;transform:scaleX(0.9500);">I</span>
<div style="left:803.8px;top:278px;width:1.2px;height:27.3px;background:#454545;"></div>
<span class="t" style="left:698.50px;top:282.00px;font-size:22.6px;color:#e4e4e4;transform:scaleX(0.9200);">J</span>
<div style="left:1007.6px;top:278px;width:1.2px;height:27.3px;background:#454545;"></div>
<span class="t tah" style="left:899.77px;top:282.00px;font-size:21.62px;color:#e4e4e4;transform:scaleX(0.9500);">K</span>
<div style="left:1211.7px;top:278px;width:1.2px;height:27.3px;background:#454545;"></div>
<span class="t tah" style="left:1105.15px;top:282.00px;font-size:21.62px;color:#e4e4e4;transform:scaleX(0.9500);">L</span>
<div style="left:1415.8px;top:278px;width:1.2px;height:27.3px;background:#454545;"></div>
<span class="t tah" style="left:1307.35px;top:282.00px;font-size:21.62px;color:#e4e4e4;transform:scaleX(0.9500);">M</span>
<div style="left:1619.6px;top:278px;width:1.2px;height:27.3px;background:#454545;"></div>
<span class="t tah" style="left:1512.25px;top:282.00px;font-size:21.62px;color:#e4e4e4;transform:scaleX(0.9500);">N</span>
<div style="left:1823.4px;top:278px;width:1.2px;height:27.3px;background:#454545;"></div>
<span class="t tah" style="left:1715.10px;top:282.00px;font-size:21.62px;color:#e4e4e4;transform:scaleX(0.9500);">O</span>
<div style="left:1929px;top:278px;width:1.2px;height:27.3px;background:#454545;"></div>
<span class="t tah" style="left:1871.22px;top:282.00px;font-size:21.62px;color:#e4e4e4;transform:scaleX(0.9500);">P</span>
<div style="left:2089.7px;top:278px;width:1.2px;height:27.3px;background:#454545;"></div>
<span class="t tah" style="left:2002.95px;top:282.00px;font-size:21.62px;color:#e4e4e4;transform:scaleX(0.9500);">Q</span>
<div style="left:2250.8px;top:278px;width:1.2px;height:27.3px;background:#454545;"></div>
<span class="t tah" style="left:2164.80px;top:282.00px;font-size:21.62px;color:#e4e4e4;transform:scaleX(0.9500);">R</span>
<div style="left:2411.8px;top:278px;width:1.2px;height:27.3px;background:#454545;"></div>
<span class="t tah" style="left:2326.32px;top:282.00px;font-size:21.62px;color:#e4e4e4;transform:scaleX(0.9500);">S</span>
<div style="left:2572.8px;top:278px;width:1.2px;height:27.3px;background:#454545;"></div>
<span class="t tah" style="left:2488.28px;top:282.00px;font-size:21.62px;color:#e4e4e4;transform:scaleX(0.9500);">T</span>
<div style="left:2733.9px;top:278px;width:1.2px;height:27.3px;background:#454545;"></div>
<span class="t tah" style="left:2647.90px;top:282.00px;font-size:21.62px;color:#e4e4e4;transform:scaleX(0.9500);">U</span>
<span class="t tah" style="left:2799.95px;top:282.00px;font-size:21.62px;color:#e4e4e4;transform:scaleX(0.9500);">V</span>
<div style="left:11px;top:305.3px;width:42px;height:1365.2px;background:#0a0a0a;"></div>
<div style="left:11px;top:306px;width:41.4px;height:44.4px;background:#6b6b6b;"></div>
<div style="left:11px;top:350.2px;width:42px;height:1.2px;background:#b5b5b5;"></div>
<span class="t tah" style="left:26.12px;top:327.00px;font-size:21.62px;color:#fff;transform:scaleX(0.9500);">1</span>
<div style="left:11px;top:391px;width:42px;height:1.2px;background:#404040;"></div>
<span class="t tah" style="left:26.60px;top:368.00px;font-size:21.62px;color:#e8e8e8;transform:scaleX(0.9500);">2</span>
<div style="left:11px;top:431.8px;width:42px;height:1.2px;background:#404040;"></div>
<span class="t tah" style="left:26.60px;top:409.00px;font-size:21.62px;color:#e8e8e8;transform:scaleX(0.9500);">3</span>
<div style="left:11px;top:460.4px;width:42px;height:1.2px;background:#404040;"></div>
<span class="t tah" style="left:26.60px;top:437.00px;font-size:21.62px;color:#e8e8e8;transform:scaleX(0.9500);">4</span>
<div style="left:11px;top:503px;width:42px;height:1.2px;background:#404040;"></div>
<span class="t tah" style="left:26.60px;top:480.00px;font-size:21.62px;color:#e8e8e8;transform:scaleX(0.9500);">5</span>
<div style="left:11px;top:538.1px;width:42px;height:1.2px;background:#404040;"></div>
<span class="t tah" style="left:26.12px;top:515.00px;font-size:21.62px;color:#e8e8e8;transform:scaleX(0.9500);">6</span>
<div style="left:11px;top:566.9px;width:42px;height:1.2px;background:#404040;"></div>
<span class="t tah" style="left:26.60px;top:544.00px;font-size:21.62px;color:#e8e8e8;transform:scaleX(0.9500);">7</span>
<div style="left:11px;top:602.2px;width:42px;height:1.2px;background:#404040;"></div>
<span class="t tah" style="left:26.60px;top:579.00px;font-size:21.62px;color:#e8e8e8;transform:scaleX(0.9500);">9</span>
<div style="left:11px;top:631px;width:42px;height:1.2px;background:#404040;"></div>
<span class="t tah" style="left:19.78px;top:608.00px;font-size:21.62px;color:#e8e8e8;transform:scaleX(0.9500);">10</span>
<div style="left:11px;top:660.2px;width:42px;height:1.2px;background:#404040;"></div>
<span class="t tah" style="left:20.25px;top:637.00px;font-size:21.62px;color:#e8e8e8;transform:scaleX(0.9500);">11</span>
<div style="left:11px;top:689px;width:42px;height:1.2px;background:#404040;"></div>
<span class="t tah" style="left:20.25px;top:666.00px;font-size:21.62px;color:#e8e8e8;transform:scaleX(0.9500);">12</span>
<div style="left:11px;top:717.9px;width:42px;height:1.2px;background:#404040;"></div>
<span class="t tah" style="left:20.25px;top:695.00px;font-size:21.62px;color:#e8e8e8;transform:scaleX(0.9500);">13</span>
<div style="left:11px;top:747.1px;width:42px;height:1.2px;background:#404040;"></div>
<span class="t tah" style="left:19.78px;top:724.00px;font-size:21.62px;color:#e8e8e8;transform:scaleX(0.9500);">14</span>
<div style="left:11px;top:768.7px;width:42px;height:1.2px;background:#404040;"></div>
<span class="t tah" style="left:20.25px;top:746.00px;font-size:21.62px;color:#e8e8e8;transform:scaleX(0.9500);">15</span>
<div style="left:11px;top:810.9px;width:42px;height:1.2px;background:#404040;"></div>
<span class="t tah" style="left:19.78px;top:788.00px;font-size:21.62px;color:#e8e8e8;transform:scaleX(0.9500);">16</span>
<div style="left:11px;top:839.896px;width:42px;height:1.2px;background:#404040;"></div>
<span class="t tah" style="left:20.25px;top:817.00px;font-size:21.62px;color:#e8e8e8;transform:scaleX(0.9500);">17</span>
<div style="left:11px;top:868.892px;width:42px;height:1.2px;background:#404040;"></div>
<span class="t tah" style="left:19.78px;top:846.00px;font-size:21.62px;color:#e8e8e8;transform:scaleX(0.9500);">18</span>
<div style="left:11px;top:897.888px;width:42px;height:1.2px;background:#404040;"></div>
<span class="t tah" style="left:20.25px;top:875.00px;font-size:21.62px;color:#e8e8e8;transform:scaleX(0.9500);">19</span>
<div style="left:11px;top:926.884px;width:42px;height:1.2px;background:#404040;"></div>
<span class="t tah" style="left:20.25px;top:904.00px;font-size:21.62px;color:#e8e8e8;transform:scaleX(0.9500);">20</span>
<div style="left:11px;top:955.88px;width:42px;height:1.2px;background:#404040;"></div>
<span class="t tah" style="left:20.73px;top:933.00px;font-size:21.62px;color:#e8e8e8;transform:scaleX(0.9500);">21</span>
<div style="left:11px;top:984.876px;width:42px;height:1.2px;background:#404040;"></div>
<span class="t tah" style="left:20.73px;top:962.00px;font-size:21.62px;color:#e8e8e8;transform:scaleX(0.9500);">22</span>
<div style="left:11px;top:1013.87px;width:42px;height:1.2px;background:#404040;"></div>
<span class="t tah" style="left:20.73px;top:991.00px;font-size:21.62px;color:#e8e8e8;transform:scaleX(0.9500);">23</span>
<div style="left:11px;top:1042.87px;width:42px;height:1.2px;background:#404040;"></div>
<span class="t tah" style="left:20.25px;top:1020.00px;font-size:21.62px;color:#e8e8e8;transform:scaleX(0.9500);">24</span>
<div style="left:11px;top:1071.86px;width:42px;height:1.2px;background:#404040;"></div>
<span class="t tah" style="left:20.73px;top:1049.00px;font-size:21.62px;color:#e8e8e8;transform:scaleX(0.9500);">25</span>
<div style="left:11px;top:1100.86px;width:42px;height:1.2px;background:#404040;"></div>
<span class="t tah" style="left:20.25px;top:1078.00px;font-size:21.62px;color:#e8e8e8;transform:scaleX(0.9500);">26</span>
<div style="left:11px;top:1129.86px;width:42px;height:1.2px;background:#404040;"></div>
<span class="t tah" style="left:20.73px;top:1107.00px;font-size:21.62px;color:#e8e8e8;transform:scaleX(0.9500);">27</span>
<div style="left:11px;top:1158.85px;width:42px;height:1.2px;background:#404040;"></div>
<span class="t tah" style="left:20.25px;top:1136.00px;font-size:21.62px;color:#e8e8e8;transform:scaleX(0.9500);">28</span>
<div style="left:11px;top:1187.85px;width:42px;height:1.2px;background:#404040;"></div>
<span class="t tah" style="left:20.73px;top:1165.00px;font-size:21.62px;color:#e8e8e8;transform:scaleX(0.9500);">29</span>
<div style="left:11px;top:1216.84px;width:42px;height:1.2px;background:#404040;"></div>
<span class="t tah" style="left:20.25px;top:1194.00px;font-size:21.62px;color:#e8e8e8;transform:scaleX(0.9500);">30</span>
<div style="left:11px;top:1245.84px;width:42px;height:1.2px;background:#404040;"></div>
<span class="t tah" style="left:20.73px;top:1223.00px;font-size:21.62px;color:#e8e8e8;transform:scaleX(0.9500);">31</span>
<div style="left:11px;top:1274.84px;width:42px;height:1.2px;background:#404040;"></div>
<span class="t tah" style="left:20.73px;top:1252.00px;font-size:21.62px;color:#e8e8e8;transform:scaleX(0.9500);">32</span>
<div style="left:11px;top:1303.83px;width:42px;height:1.2px;background:#404040;"></div>
<span class="t tah" style="left:20.73px;top:1281.00px;font-size:21.62px;color:#e8e8e8;transform:scaleX(0.9500);">33</span>
<div style="left:11px;top:1332.83px;width:42px;height:1.2px;background:#404040;"></div>
<span class="t tah" style="left:20.25px;top:1310.00px;font-size:21.62px;color:#e8e8e8;transform:scaleX(0.9500);">34</span>
<div style="left:11px;top:1361.82px;width:42px;height:1.2px;background:#404040;"></div>
<span class="t tah" style="left:20.73px;top:1339.00px;font-size:21.62px;color:#e8e8e8;transform:scaleX(0.9500);">35</span>
<div style="left:11px;top:1390.82px;width:42px;height:1.2px;background:#404040;"></div>
<span class="t tah" style="left:20.25px;top:1368.00px;font-size:21.62px;color:#e8e8e8;transform:scaleX(0.9500);">36</span>
<div style="left:11px;top:1419.82px;width:42px;height:1.2px;background:#404040;"></div>
<span class="t tah" style="left:20.73px;top:1397.00px;font-size:21.62px;color:#e8e8e8;transform:scaleX(0.9500);">37</span>
<div style="left:11px;top:1448.81px;width:42px;height:1.2px;background:#404040;"></div>
<span class="t tah" style="left:20.25px;top:1426.00px;font-size:21.62px;color:#e8e8e8;transform:scaleX(0.9500);">38</span>
<div style="left:11px;top:1477.81px;width:42px;height:1.2px;background:#404040;"></div>
<span class="t tah" style="left:20.73px;top:1455.00px;font-size:21.62px;color:#e8e8e8;transform:scaleX(0.9500);">39</span>
<div style="left:11px;top:1506.8px;width:42px;height:1.2px;background:#404040;"></div>
<span class="t tah" style="left:20.73px;top:1484.00px;font-size:21.62px;color:#e8e8e8;transform:scaleX(0.9500);">40</span>
<div style="left:11px;top:1536.4px;width:42px;height:1.2px;background:#404040;"></div>
<span class="t tah" style="left:21.20px;top:1513.00px;font-size:21.62px;color:#e8e8e8;transform:scaleX(0.9500);">41</span>
<div style="left:11px;top:1578.6px;width:42px;height:1.2px;background:#404040;"></div>
<span class="t tah" style="left:21.20px;top:1555.00px;font-size:21.62px;color:#e8e8e8;transform:scaleX(0.9500);">42</span>
<div style="left:11px;top:1607.6px;width:42px;height:1.2px;background:#404040;"></div>
<span class="t tah" style="left:21.20px;top:1584.00px;font-size:21.62px;color:#e8e8e8;transform:scaleX(0.9500);">43</span>
<div style="left:11px;top:1636.8px;width:42px;height:1.2px;background:#404040;"></div>
<span class="t tah" style="left:20.73px;top:1614.00px;font-size:21.62px;color:#e8e8e8;transform:scaleX(0.9500);">44</span>
<div style="left:11px;top:1666.4px;width:42px;height:1.2px;background:#404040;"></div>
<span class="t tah" style="left:21.20px;top:1643.00px;font-size:21.62px;color:#e8e8e8;transform:scaleX(0.9500);">45</span>
<div style="left:11px;top:566.9px;width:42px;height:1.2px;background:#404040;"></div>
<div style="left:52.4px;top:304.6px;width:1.3px;height:46.4px;background:#1e7a46;"></div>
<div style="left:52.4px;top:304.6px;width:30px;height:1.3px;background:#1e7a46;"></div>
<div style="left:53.6px;top:460.2px;width:28.4px;height:1px;background:#c8c8c8;"></div>
<span class="t tahb" style="left:89.30px;top:312.00px;font-size:37.82px;color:#262626;font-weight:bold;transform:scaleX(0.9401);">Top Revenue</span>
<span class="t tahb" style="left:88.50px;top:356.00px;font-size:33.1px;color:#000;font-weight:bold;transform:scaleX(0.9320);">ABC Company Inc.</span>
<span class="t tahb" style="left:85.66px;top:402.00px;font-size:20.84px;color:#2b7de9;font-weight:bold;transform:scaleX(0.9384);">Go to Table of Contents</span>
<div style="left:86.4px;top:421.8px;width:257.6px;height:1.9px;background:#2b7de9;"></div>
<div style="left:82px;top:461px;width:2778.3px;height:42.2px;background:#4b4fd1;"></div>
<span class="t tahb" style="left:964.80px;top:467.00px;font-size:33.1px;color:#fff;font-weight:bold;transform:scaleX(0.9251);">Top 5 Revenue Streams ($&#x27;000) - 5 years to December 2030</span>
<div style="left:82px;top:538.7px;width:1538.2px;height:28.8px;background:#6e74e8;"></div>
<div style="left:600px;top:538.7px;width:1.2px;height:28.8px;background:#fff;"></div>
<div style="left:803.8px;top:538.7px;width:1.2px;height:28.8px;background:#fff;"></div>
<div style="left:1007.6px;top:538.7px;width:1.2px;height:28.8px;background:#fff;"></div>
<div style="left:1211.7px;top:538.7px;width:1.2px;height:28.8px;background:#fff;"></div>
<div style="left:1415.8px;top:538.7px;width:1.2px;height:28.8px;background:#fff;"></div>
<span class="t tahb" style="left:97.13px;top:543.00px;font-size:21.62px;color:#fff;font-weight:bold;transform:scaleX(0.9260);">Year Ending</span>
<span class="t tahb" style="left:674.76px;top:543.00px;font-size:21.62px;color:#fff;font-weight:bold;transform:scaleX(0.9431);">2026</span>
<span class="t tahb" style="left:878.56px;top:543.00px;font-size:21.62px;color:#fff;font-weight:bold;transform:scaleX(0.9431);">2027</span>
<span class="t tahb" style="left:1082.51px;top:543.00px;font-size:21.62px;color:#fff;font-weight:bold;transform:scaleX(0.9431);">2028</span>
<span class="t tahb" style="left:1286.61px;top:543.00px;font-size:21.62px;color:#fff;font-weight:bold;transform:scaleX(0.9431);">2029</span>
<span class="t tahb" style="left:1490.56px;top:543.00px;font-size:21.62px;color:#fff;font-weight:bold;transform:scaleX(0.9431);">2030</span>
<span class="t tah" style="left:84.31px;top:578.00px;font-size:21.62px;color:#000;transform:scaleX(0.9922);">Individual Certification Course</span>
<span class="t tah" style="left:758.48px;top:578.00px;font-size:21.62px;color:#000;transform:scaleX(0.9550);">297</span>
<span class="t tah" style="left:962.28px;top:578.00px;font-size:21.62px;color:#000;transform:scaleX(0.9550);">743</span>
<span class="t tah" style="left:1148.67px;top:578.00px;font-size:21.62px;color:#000;transform:scaleX(0.9550);">1,485</span>
<span class="t tah" style="left:1351.82px;top:578.00px;font-size:21.62px;color:#000;transform:scaleX(0.9550);">2,356</span>
<span class="t tah" style="left:1555.62px;top:578.00px;font-size:21.62px;color:#000;transform:scaleX(0.9550);">3,564</span>
<span class="t tah" style="left:2012.92px;top:578.00px;font-size:21.62px;color:#000;font-style:italic;transform:scaleX(1.0450);">53.4%</span>
<span class="t tah" style="left:2174.02px;top:578.00px;font-size:21.62px;color:#000;font-style:italic;transform:scaleX(1.0450);">53.1%</span>
<span class="t tah" style="left:2335.02px;top:578.00px;font-size:21.62px;color:#000;font-style:italic;transform:scaleX(1.0450);">52.8%</span>
<span class="t tah" style="left:2496.02px;top:578.00px;font-size:21.62px;color:#000;font-style:italic;transform:scaleX(1.0450);">51.5%</span>
<span class="t tah" style="left:2657.12px;top:578.00px;font-size:21.62px;color:#000;font-style:italic;transform:scaleX(1.0450);">52.3%</span>
<span class="t tah" style="left:84.29px;top:607.00px;font-size:21.62px;color:#000;transform:scaleX(1.0142);">Corporate Cohort Training</span>
<span class="t tah" style="left:757.52px;top:607.00px;font-size:21.62px;color:#000;transform:scaleX(0.9550);">138</span>
<span class="t tah" style="left:962.28px;top:607.00px;font-size:21.62px;color:#000;transform:scaleX(0.9550);">365</span>
<span class="t tah" style="left:1165.42px;top:607.00px;font-size:21.62px;color:#000;transform:scaleX(0.9550);">756</span>
<span class="t tah" style="left:1352.77px;top:607.00px;font-size:21.62px;color:#000;transform:scaleX(0.9550);">1,281</span>
<span class="t tah" style="left:1556.57px;top:607.00px;font-size:21.62px;color:#000;transform:scaleX(0.9550);">1,895</span>
<span class="t tah" style="left:2012.92px;top:607.00px;font-size:21.62px;color:#000;font-style:italic;transform:scaleX(1.0450);">24.8%</span>
<span class="t tah" style="left:2174.02px;top:607.00px;font-size:21.62px;color:#000;font-style:italic;transform:scaleX(1.0450);">26.1%</span>
<span class="t tah" style="left:2335.02px;top:607.00px;font-size:21.62px;color:#000;font-style:italic;transform:scaleX(1.0450);">26.9%</span>
<span class="t tah" style="left:2496.02px;top:607.00px;font-size:21.62px;color:#000;font-style:italic;transform:scaleX(1.0450);">28.0%</span>
<span class="t tah" style="left:2657.12px;top:607.00px;font-size:21.62px;color:#000;font-style:italic;transform:scaleX(1.0450);">27.8%</span>
<span class="t tah" style="left:84.29px;top:636.00px;font-size:21.62px;color:#000;transform:scaleX(1.0075);">Dementia Care Workshop</span>
<span class="t tah" style="left:770.29px;top:636.00px;font-size:21.62px;color:#000;transform:scaleX(0.9550);">61</span>
<span class="t tah" style="left:962.28px;top:636.00px;font-size:21.62px;color:#000;transform:scaleX(0.9550);">145</span>
<span class="t tah" style="left:1165.42px;top:636.00px;font-size:21.62px;color:#000;transform:scaleX(0.9550);">286</span>
<span class="t tah" style="left:1369.52px;top:636.00px;font-size:21.62px;color:#000;transform:scaleX(0.9550);">468</span>
<span class="t tah" style="left:1574.28px;top:636.00px;font-size:21.62px;color:#000;transform:scaleX(0.9550);">677</span>
<span class="t tah" style="left:2012.92px;top:636.00px;font-size:21.62px;color:#000;font-style:italic;transform:scaleX(1.0450);">10.9%</span>
<span class="t tah" style="left:2174.02px;top:636.00px;font-size:21.62px;color:#000;font-style:italic;transform:scaleX(1.0450);">10.4%</span>
<span class="t tah" style="left:2335.02px;top:636.00px;font-size:21.62px;color:#000;font-style:italic;transform:scaleX(1.0450);">10.2%</span>
<span class="t tah" style="left:2496.02px;top:636.00px;font-size:21.62px;color:#000;font-style:italic;transform:scaleX(1.0450);">10.2%</span>
<span class="t tah" style="left:2670.04px;top:636.00px;font-size:21.62px;color:#000;font-style:italic;transform:scaleX(1.0450);">9.9%</span>
<span class="t tah" style="left:84.28px;top:665.00px;font-size:21.62px;color:#000;transform:scaleX(1.0154);">Mobility Training Workshop</span>
<span class="t tah" style="left:770.29px;top:665.00px;font-size:21.62px;color:#000;transform:scaleX(0.9550);">61</span>
<span class="t tah" style="left:962.28px;top:665.00px;font-size:21.62px;color:#000;transform:scaleX(0.9550);">145</span>
<span class="t tah" style="left:1165.42px;top:665.00px;font-size:21.62px;color:#000;transform:scaleX(0.9550);">286</span>
<span class="t tah" style="left:1369.52px;top:665.00px;font-size:21.62px;color:#000;transform:scaleX(0.9550);">468</span>
<span class="t tah" style="left:1574.28px;top:665.00px;font-size:21.62px;color:#000;transform:scaleX(0.9550);">677</span>
<span class="t tah" style="left:2012.92px;top:665.00px;font-size:21.62px;color:#000;font-style:italic;transform:scaleX(1.0450);">10.9%</span>
<span class="t tah" style="left:2174.02px;top:665.00px;font-size:21.62px;color:#000;font-style:italic;transform:scaleX(1.0450);">10.4%</span>
<span class="t tah" style="left:2335.02px;top:665.00px;font-size:21.62px;color:#000;font-style:italic;transform:scaleX(1.0450);">10.2%</span>
<span class="t tah" style="left:2496.02px;top:665.00px;font-size:21.62px;color:#000;font-style:italic;transform:scaleX(1.0450);">10.2%</span>
<span class="t tah" style="left:2670.04px;top:665.00px;font-size:21.62px;color:#000;font-style:italic;transform:scaleX(1.0450);">9.9%</span>
<span class="t tah" style="left:84.28px;top:694.00px;font-size:21.62px;color:#000;transform:scaleX(1.0189);">Other Revenue</span>
<span class="t tah" style="left:762.25px;top:693.00px;font-size:21.62px;color:#000;transform:scaleX(0.9500);">-</span>
<span class="t tah" style="left:966.05px;top:693.00px;font-size:21.62px;color:#000;transform:scaleX(0.9500);">-</span>
<span class="t tah" style="left:1170.15px;top:693.00px;font-size:21.62px;color:#000;transform:scaleX(0.9500);">-</span>
<span class="t tah" style="left:1374.25px;top:693.00px;font-size:21.62px;color:#000;transform:scaleX(0.9500);">-</span>
<span class="t tah" style="left:1578.05px;top:693.00px;font-size:21.62px;color:#000;transform:scaleX(0.9500);">-</span>
<span class="t tah" style="left:2069.85px;top:693.00px;font-size:21.62px;color:#000;font-style:italic;transform:scaleX(0.9500);">-</span>
<span class="t tah" style="left:2230.95px;top:693.00px;font-size:21.62px;color:#000;font-style:italic;transform:scaleX(0.9500);">-</span>
<span class="t tah" style="left:2391.95px;top:693.00px;font-size:21.62px;color:#000;font-style:italic;transform:scaleX(0.9500);">-</span>
<span class="t tah" style="left:2552.95px;top:693.00px;font-size:21.62px;color:#000;font-style:italic;transform:scaleX(0.9500);">-</span>
<span class="t tah" style="left:2714.05px;top:693.00px;font-size:21.62px;color:#000;font-style:italic;transform:scaleX(0.9500);">-</span>
<div style="left:81.3px;top:718px;width:1539.7px;height:29.9px;background:#4ab2e6;"></div>
<span class="t tahb" style="left:97.20px;top:722.00px;font-size:25.67px;color:#fff;font-weight:bold;transform:scaleX(0.8782);">Total Revenue</span>
<span class="t tahb" style="left:748.25px;top:722.00px;font-size:22.2px;color:#fff;font-weight:bold;transform:scaleX(0.9100);">556</span>
<span class="t tahb" style="left:930.33px;top:722.00px;font-size:22.2px;color:#fff;font-weight:bold;transform:scaleX(0.9100);">1,398</span>
<span class="t tahb" style="left:1135.34px;top:722.00px;font-size:22.2px;color:#fff;font-weight:bold;transform:scaleX(0.9100);">2,813</span>
<span class="t tahb" style="left:1338.53px;top:722.00px;font-size:22.2px;color:#fff;font-weight:bold;transform:scaleX(0.9100);">4,574</span>
<span class="t tahb" style="left:1543.24px;top:722.00px;font-size:22.2px;color:#fff;font-weight:bold;transform:scaleX(0.9100);">6,813</span>
<div style="left:1929.6px;top:538.9px;width:804.9px;height:28.4px;background:#6e74e8;"></div>
<div style="left:2089.7px;top:538.9px;width:1.2px;height:28.4px;background:#fff;"></div>
<div style="left:2250.8px;top:538.9px;width:1.2px;height:28.4px;background:#fff;"></div>
<div style="left:2411.8px;top:538.9px;width:1.2px;height:28.4px;background:#fff;"></div>
<div style="left:2572.8px;top:538.9px;width:1.2px;height:28.4px;background:#fff;"></div>
<span class="t tahb" style="left:1982.21px;top:543.00px;font-size:21.62px;color:#fff;font-weight:bold;transform:scaleX(0.9396);">2026</span>
<span class="t tahb" style="left:2143.11px;top:543.00px;font-size:21.62px;color:#fff;font-weight:bold;transform:scaleX(0.9396);">2027</span>
<span class="t tahb" style="left:2304.16px;top:543.00px;font-size:21.62px;color:#fff;font-weight:bold;transform:scaleX(0.9396);">2028</span>
<span class="t tahb" style="left:2465.16px;top:543.00px;font-size:21.62px;color:#fff;font-weight:bold;transform:scaleX(0.9396);">2029</span>
<span class="t tahb" style="left:2626.21px;top:543.00px;font-size:21.62px;color:#fff;font-weight:bold;transform:scaleX(0.9396);">2030</span>
<div style="left:1929.2px;top:718px;width:805.8px;height:29.9px;background:#4ab2e6;"></div>
<span class="t tahb" style="left:2016.30px;top:722.00px;font-size:22.2px;color:#fff;font-weight:bold;font-style:italic;transform:scaleX(0.9924);">100%</span>
<span class="t tahb" style="left:2177.40px;top:722.00px;font-size:22.2px;color:#fff;font-weight:bold;font-style:italic;transform:scaleX(0.9924);">100%</span>
<span class="t tahb" style="left:2338.40px;top:722.00px;font-size:22.2px;color:#fff;font-weight:bold;font-style:italic;transform:scaleX(0.9924);">100%</span>
<span class="t tahb" style="left:2499.40px;top:722.00px;font-size:22.2px;color:#fff;font-weight:bold;font-style:italic;transform:scaleX(0.9924);">100%</span>
<span class="t tahb" style="left:2660.50px;top:722.00px;font-size:22.2px;color:#fff;font-weight:bold;font-style:italic;transform:scaleX(0.9924);">100%</span>
<div style="left:82px;top:769px;width:2778.3px;height:42px;background:#4b4fd1;"></div>
<span class="t tahb" style="left:964.80px;top:775.00px;font-size:33.1px;color:#fff;font-weight:bold;transform:scaleX(0.9251);">Top 5 Revenue Streams ($&#x27;000) - 5 years to December 2030</span>
<div style="left:82px;top:1537px;width:2778.3px;height:42px;background:#4b4fd1;"></div>
<div style="left:1823.5px;top:1537px;width:1.2px;height:42px;background:#8c90e6;"></div>
<span class="t tahb" style="left:690.99px;top:1543.00px;font-size:33.1px;color:#fff;font-weight:bold;transform:scaleX(0.9368);">Revenue Depth ($&#x27;000) - 2026</span>
<span class="t tahb" style="left:2062.16px;top:1543.00px;font-size:33.1px;color:#fff;font-weight:bold;transform:scaleX(0.9459);">Monthly Run-Rate ($&#x27;000) - 2026</span>
<div style="left:2573px;top:1579.4px;width:287.3px;height:28.4px;background:#fff176;border-left:1.5px solid #d0d0d0;border-bottom:1.5px solid #d0d0d0;box-sizing:border-box;"></div>
<span class="t tahb" style="left:2697.36px;top:1584.00px;font-size:21.62px;color:#111;font-weight:bold;transform:scaleX(0.9379);">2026</span>
<div style="left:81px;top:1619.5px;width:1525px;height:1.2px;background:#7fb8dc;"></div>
<div style="left:1638px;top:1648.4px;width:12px;height:11.6px;background:#4ab2e6;"></div>
<span class="t tahb" style="left:1654.65px;top:1643.00px;font-size:21.23px;color:#000;font-weight:bold;transform:scaleX(0.9488);">Individual Certification</span>
<div style="left:2365.6px;top:1660.3px;width:79.7px;height:11.7px;background:#fff;border:1.3px solid #444;box-sizing:border-box;"></div>
<div style="left:2860.3px;top:278px;width:30.7px;height:1392.5px;background:#0c0c0c;"></div>
<div style="left:2862.5px;top:279.5px;width:26px;height:1389.5px;background:#141414;border-radius:13px;"></div>
<svg style="left:2866px;top:283px;" width="20" height="16" viewBox="0 0 20 16"><path d="M4.3 11.5L10 4.2L15.7 11.5Z" fill="#9a9a9a" stroke="#9a9a9a" stroke-width="2.4" stroke-linejoin="round"/></svg>
<div style="left:2870.2px;top:304px;width:11.8px;height:561.7px;background:#9c9c9c;border-radius:6px;"></div>
<svg style="left:2866px;top:1649.5px;" width="20" height="16" viewBox="0 0 20 16"><path d="M4.3 4.5L10 11.8L15.7 4.5Z" fill="#9a9a9a" stroke="#9a9a9a" stroke-width="2.4" stroke-linejoin="round"/></svg>
<svg style="left:0px;top:830px;" width="1640" height="680" viewBox="0 830 1640 680"><rect x="175.5" y="853.05" width="1444.1" height="1.1" fill="#4d70b0"/><rect x="175.5" y="916.83" width="1444.1" height="1.1" fill="#4d70b0"/><rect x="175.5" y="980.61" width="1444.1" height="1.1" fill="#4d70b0"/><rect x="175.5" y="1044.39" width="1444.1" height="1.1" fill="#4d70b0"/><rect x="175.5" y="1108.17" width="1444.1" height="1.1" fill="#4d70b0"/><rect x="175.5" y="1171.95" width="1444.1" height="1.1" fill="#4d70b0"/><rect x="175.5" y="1235.73" width="1444.1" height="1.1" fill="#4d70b0"/><rect x="175.5" y="1299.51" width="1444.1" height="1.1" fill="#4d70b0"/><rect x="175.5" y="1363.29" width="1444.1" height="1.1" fill="#4d70b0"/><rect x="175.5" y="1427.07" width="1444.1" height="1.1" fill="#4d70b0"/><rect x="175.5" y="1490.85" width="1444.1" height="1.1" fill="#4d70b0"/><rect x="224.0" y="1150.81" width="192.8" height="340.89" fill="#4ab2e6"/><rect x="224.0" y="992.64" width="192.8" height="158.47" fill="#4d50d2"/><rect x="224.0" y="923.12" width="192.8" height="69.82" fill="#f07b70"/><rect x="224.0" y="853.60" width="192.8" height="69.82" fill="#f5b400"/><rect x="512.8" y="1152.73" width="192.8" height="338.97" fill="#4ab2e6"/><rect x="512.8" y="986.26" width="192.8" height="166.77" fill="#4d50d2"/><rect x="512.8" y="919.93" width="192.8" height="66.63" fill="#f07b70"/><rect x="512.8" y="853.60" width="192.8" height="66.63" fill="#f5b400"/><rect x="801.6" y="1154.98" width="192.8" height="336.72" fill="#4ab2e6"/><rect x="801.6" y="983.58" width="192.8" height="171.70" fill="#4d50d2"/><rect x="801.6" y="918.59" width="192.8" height="65.29" fill="#f07b70"/><rect x="801.6" y="853.60" width="192.8" height="65.29" fill="#f5b400"/><rect x="1090.4" y="1162.60" width="192.8" height="329.10" fill="#4ab2e6"/><rect x="1090.4" y="983.84" width="192.8" height="179.06" fill="#4d50d2"/><rect x="1090.4" y="918.72" width="192.8" height="65.42" fill="#f07b70"/><rect x="1090.4" y="853.60" width="192.8" height="65.42" fill="#f5b400"/><rect x="1379.2" y="1157.50" width="192.8" height="334.20" fill="#4ab2e6"/><rect x="1379.2" y="980.01" width="192.8" height="177.79" fill="#4d50d2"/><rect x="1379.2" y="916.81" width="192.8" height="63.51" fill="#f07b70"/><rect x="1379.2" y="853.60" width="192.8" height="63.51" fill="#f5b400"/></svg>
<div style="left:290.5px;top:1303.31px;width:59.2px;height:35.6px;background:#dce8f4;"></div>
<span class="t tahb" style="left:299.36px;top:1311.00px;font-size:21.71px;color:#000;font-weight:bold;transform:scaleX(0.9398);">297</span>
<div style="left:287px;top:1053.93px;width:66.2px;height:35.6px;background:#b1b3ec;"></div>
<span class="t tahb" style="left:301.38px;top:1062.00px;font-size:21.71px;color:#000;font-weight:bold;transform:scaleX(0.9620);">138</span>
<div style="left:294.3px;top:940.08px;width:51.6px;height:35.6px;background:#f8cbad;"></div>
<span class="t tahb" style="left:309.67px;top:948.00px;font-size:21.71px;color:#000;font-weight:bold;transform:scaleX(0.9252);">61</span>
<div style="left:294.3px;top:870.56px;width:51.6px;height:35.6px;background:#fff2cc;"></div>
<span class="t tahb" style="left:309.67px;top:878.00px;font-size:21.71px;color:#000;font-weight:bold;transform:scaleX(0.9252);">61</span>
<div style="left:304.55px;top:835.8px;width:31.1px;height:35.6px;background:#e2efda;"></div>
<span class="t tahb" style="left:313.46px;top:843.00px;font-size:21.71px;color:#000;font-weight:bold;transform:scaleX(0.8929);">0</span>
<div style="left:579.3px;top:1304.26px;width:59.2px;height:35.6px;background:#dce8f4;"></div>
<span class="t tahb" style="left:588.16px;top:1312.00px;font-size:21.71px;color:#000;font-weight:bold;transform:scaleX(0.9398);">743</span>
<div style="left:575.8px;top:1051.7px;width:66.2px;height:35.6px;background:#b1b3ec;"></div>
<span class="t tahb" style="left:591.16px;top:1059.00px;font-size:21.71px;color:#000;font-weight:bold;transform:scaleX(0.9398);">365</span>
<div style="left:575.8px;top:935.297px;width:66.2px;height:35.6px;background:#f8cbad;"></div>
<span class="t tahb" style="left:590.18px;top:943.00px;font-size:21.71px;color:#000;font-weight:bold;transform:scaleX(0.9620);">145</span>
<div style="left:575.8px;top:868.966px;width:66.2px;height:35.6px;background:#fff2cc;"></div>
<span class="t tahb" style="left:590.18px;top:877.00px;font-size:21.71px;color:#000;font-weight:bold;transform:scaleX(0.9620);">145</span>
<div style="left:593.35px;top:835.8px;width:31.1px;height:35.6px;background:#e2efda;"></div>
<span class="t tahb" style="left:602.26px;top:843.00px;font-size:21.71px;color:#000;font-weight:bold;transform:scaleX(0.8929);">0</span>
<div style="left:857.5px;top:1305.39px;width:80.4px;height:35.6px;background:#dce8f4;"></div>
<span class="t tahb" style="left:865.41px;top:1313.00px;font-size:21.71px;color:#000;font-weight:bold;transform:scaleX(0.9428);">1,485</span>
<div style="left:864.6px;top:1051.48px;width:66.2px;height:35.6px;background:#b1b3ec;"></div>
<span class="t tahb" style="left:879.96px;top:1059.00px;font-size:21.71px;color:#000;font-weight:bold;transform:scaleX(0.9398);">756</span>
<div style="left:864.6px;top:933.286px;width:66.2px;height:35.6px;background:#f8cbad;"></div>
<span class="t tahb" style="left:879.96px;top:941.00px;font-size:21.71px;color:#000;font-weight:bold;transform:scaleX(0.9398);">286</span>
<div style="left:864.6px;top:868.295px;width:66.2px;height:35.6px;background:#fff2cc;"></div>
<span class="t tahb" style="left:879.96px;top:876.00px;font-size:21.71px;color:#000;font-weight:bold;transform:scaleX(0.9398);">286</span>
<div style="left:882.15px;top:835.8px;width:31.1px;height:35.6px;background:#e2efda;"></div>
<span class="t tahb" style="left:891.06px;top:843.00px;font-size:21.71px;color:#000;font-weight:bold;transform:scaleX(0.8929);">0</span>
<div style="left:1146.3px;top:1309.2px;width:80.4px;height:35.6px;background:#dce8f4;"></div>
<span class="t tahb" style="left:1155.17px;top:1317.00px;font-size:21.71px;color:#000;font-weight:bold;transform:scaleX(0.9287);">2,356</span>
<div style="left:1142.8px;top:1055.42px;width:87.4px;height:35.6px;background:#b1b3ec;"></div>
<span class="t tahb" style="left:1157.21px;top:1063.00px;font-size:21.71px;color:#000;font-weight:bold;transform:scaleX(0.9428);">1,281</span>
<div style="left:1153.4px;top:933.481px;width:66.2px;height:35.6px;background:#f8cbad;"></div>
<span class="t tahb" style="left:1169.70px;top:941.00px;font-size:21.71px;color:#000;font-weight:bold;transform:scaleX(0.9185);">468</span>
<div style="left:1153.4px;top:868.36px;width:66.2px;height:35.6px;background:#fff2cc;"></div>
<span class="t tahb" style="left:1169.70px;top:876.00px;font-size:21.71px;color:#000;font-weight:bold;transform:scaleX(0.9185);">468</span>
<div style="left:1170.95px;top:835.8px;width:31.1px;height:35.6px;background:#e2efda;"></div>
<span class="t tahb" style="left:1179.86px;top:843.00px;font-size:21.71px;color:#000;font-weight:bold;transform:scaleX(0.8929);">0</span>
<div style="left:1435.1px;top:1306.65px;width:80.4px;height:35.6px;background:#dce8f4;"></div>
<span class="t tahb" style="left:1443.99px;top:1314.00px;font-size:21.71px;color:#000;font-weight:bold;transform:scaleX(0.9149);">3,564</span>
<div style="left:1431.6px;top:1050.95px;width:87.4px;height:35.6px;background:#b1b3ec;"></div>
<span class="t tahb" style="left:1446.01px;top:1059.00px;font-size:21.71px;color:#000;font-weight:bold;transform:scaleX(0.9428);">1,895</span>
<div style="left:1442.2px;top:930.608px;width:66.2px;height:35.6px;background:#f8cbad;"></div>
<span class="t tahb" style="left:1457.56px;top:938.00px;font-size:21.71px;color:#000;font-weight:bold;transform:scaleX(0.9398);">677</span>
<div style="left:1442.2px;top:867.403px;width:66.2px;height:35.6px;background:#fff2cc;"></div>
<span class="t tahb" style="left:1457.56px;top:875.00px;font-size:21.71px;color:#000;font-weight:bold;transform:scaleX(0.9398);">677</span>
<div style="left:1459.75px;top:835.8px;width:31.1px;height:35.6px;background:#e2efda;"></div>
<span class="t tahb" style="left:1468.66px;top:843.00px;font-size:21.71px;color:#000;font-weight:bold;transform:scaleX(0.8929);">0</span>
<span class="t tahb" style="left:84.94px;top:843.00px;font-size:21.71px;color:#000;font-weight:bold;transform:scaleX(1.0290);">100%</span>
<span class="t tahb" style="left:99.55px;top:907.00px;font-size:21.71px;color:#000;font-weight:bold;transform:scaleX(1.0468);">90%</span>
<span class="t tahb" style="left:99.55px;top:971.00px;font-size:21.71px;color:#000;font-weight:bold;transform:scaleX(1.0468);">80%</span>
<span class="t tahb" style="left:99.55px;top:1035.00px;font-size:21.71px;color:#000;font-weight:bold;transform:scaleX(1.0468);">70%</span>
<span class="t tahb" style="left:99.55px;top:1098.00px;font-size:21.71px;color:#000;font-weight:bold;transform:scaleX(1.0468);">60%</span>
<span class="t tahb" style="left:99.55px;top:1162.00px;font-size:21.71px;color:#000;font-weight:bold;transform:scaleX(1.0468);">50%</span>
<span class="t tahb" style="left:100.60px;top:1226.00px;font-size:21.71px;color:#000;font-weight:bold;transform:scaleX(1.0268);">40%</span>
<span class="t tahb" style="left:99.55px;top:1290.00px;font-size:21.71px;color:#000;font-weight:bold;transform:scaleX(1.0468);">30%</span>
<span class="t tahb" style="left:99.55px;top:1353.00px;font-size:21.71px;color:#000;font-weight:bold;transform:scaleX(1.0468);">20%</span>
<span class="t tahb" style="left:98.46px;top:1417.00px;font-size:21.71px;color:#000;font-weight:bold;transform:scaleX(1.0677);">10%</span>
<span class="t tahb" style="left:113.61px;top:1481.00px;font-size:21.71px;color:#000;font-weight:bold;transform:scaleX(1.0942);">0%</span>
<span class="t tahb" style="left:291.24px;top:1510.00px;font-size:21.71px;color:#000;font-weight:bold;transform:scaleX(0.9605);">2026</span>
<span class="t tahb" style="left:580.04px;top:1510.00px;font-size:21.71px;color:#000;font-weight:bold;transform:scaleX(0.9605);">2027</span>
<span class="t tahb" style="left:868.84px;top:1510.00px;font-size:21.71px;color:#000;font-weight:bold;transform:scaleX(0.9605);">2028</span>
<span class="t tahb" style="left:1157.64px;top:1510.00px;font-size:21.71px;color:#000;font-weight:bold;transform:scaleX(0.9605);">2029</span>
<span class="t tahb" style="left:1446.46px;top:1510.00px;font-size:21.71px;color:#000;font-weight:bold;transform:scaleX(0.9443);">2030</span>
<svg style="left:1638px;top:880.9px;" width="62" height="20" viewBox="0 0 62 20"><path d="M5 10H57.5" stroke="#4ab2e6" stroke-width="4" stroke-linecap="round"/><circle cx="30.5" cy="10" r="5" fill="#4ab2e6"/></svg>
<span class="t tahb" style="left:1701.48px;top:880.00px;font-size:21.71px;color:#000;font-weight:bold;transform:scaleX(0.9591);">Individual</span>
<span class="t tahb" style="left:1702.48px;top:907.00px;font-size:21.71px;color:#000;font-weight:bold;transform:scaleX(0.9188);">Certification Course</span>
<svg style="left:1638px;top:1012.9px;" width="62" height="20" viewBox="0 0 62 20"><path d="M5 10H57.5" stroke="#4d50d2" stroke-width="4" stroke-linecap="round"/><rect x="25" y="4.5" width="11" height="11" fill="#4d50d2"/></svg>
<span class="t tahb" style="left:1702.48px;top:1012.00px;font-size:21.71px;color:#000;font-weight:bold;transform:scaleX(0.9152);">Corporate Cohort</span>
<span class="t tahb" style="left:1703.40px;top:1039.00px;font-size:21.71px;color:#000;font-weight:bold;transform:scaleX(0.9319);">Training</span>
<svg style="left:1638px;top:1144.9px;" width="62" height="20" viewBox="0 0 62 20"><path d="M5 10H57.5" stroke="#f07b70" stroke-width="4" stroke-linecap="round"/><path d="M30.5 4L36.3 15H24.7Z" fill="#f07b70"/></svg>
<span class="t tahb" style="left:1701.55px;top:1144.00px;font-size:21.71px;color:#000;font-weight:bold;transform:scaleX(0.9233);">Dementia Care</span>
<span class="t tahb" style="left:1703.40px;top:1171.00px;font-size:21.71px;color:#000;font-weight:bold;transform:scaleX(0.9252);">Workshop</span>
<svg style="left:1638px;top:1276.8px;" width="62" height="20" viewBox="0 0 62 20"><path d="M5 10H57.5" stroke="#f5b400" stroke-width="4" stroke-linecap="round"/><path d="M26 5.5L35 14.5M35 5.5L26 14.5" stroke="#e8a800" stroke-width="1.4"/></svg>
<span class="t tahb" style="left:1701.54px;top:1276.00px;font-size:21.71px;color:#000;font-weight:bold;transform:scaleX(0.9317);">Mobility Training</span>
<span class="t tahb" style="left:1703.40px;top:1303.00px;font-size:21.71px;color:#000;font-weight:bold;transform:scaleX(0.9252);">Workshop</span>
<svg style="left:1638px;top:1408.7px;" width="62" height="20" viewBox="0 0 62 20"><path d="M5 10H57.5" stroke="#2db5a3" stroke-width="4" stroke-linecap="round"/><rect x="25" y="4.5" width="11" height="11" fill="#5cae6e"/></svg>
<span class="t tahb" style="left:1702.48px;top:1408.00px;font-size:21.71px;color:#000;font-weight:bold;transform:scaleX(0.9170);">Other Revenue</span>
<svg style="left:2060px;top:840px;" width="800.5" height="670" viewBox="2060 840 800.5 670"><rect x="2070.6" y="853.00" width="789.9" height="1" fill="#68b1d6"/><rect x="2070.6" y="932.49" width="789.9" height="1" fill="#68b1d6"/><rect x="2070.6" y="1011.98" width="789.9" height="1" fill="#68b1d6"/><rect x="2070.6" y="1091.46" width="789.9" height="1" fill="#68b1d6"/><rect x="2070.6" y="1170.95" width="789.9" height="1" fill="#68b1d6"/><rect x="2070.6" y="1250.44" width="789.9" height="1" fill="#68b1d6"/><rect x="2070.6" y="1329.93" width="789.9" height="1" fill="#68b1d6"/><rect x="2070.6" y="1409.41" width="789.9" height="1" fill="#68b1d6"/><rect x="2070.6" y="1488.90" width="789.9" height="1" fill="#68b1d6"/><polyline points="2151.3,1442.2 2312.1,1371.3 2472.8,1253.3 2633.6,1114.9 2794.3,922.8" fill="none" stroke="#4ab2e6" stroke-width="3.8" stroke-linejoin="round" stroke-linecap="round"/><circle cx="2151.3" cy="1442.2" r="7" fill="#4ab2e6"/><circle cx="2312.1" cy="1371.3" r="7" fill="#4ab2e6"/><circle cx="2472.8" cy="1253.3" r="7" fill="#4ab2e6"/><circle cx="2633.6" cy="1114.9" r="7" fill="#4ab2e6"/><circle cx="2794.3" cy="922.8" r="7" fill="#4ab2e6"/><polyline points="2151.3,1467.5 2312.1,1431.4 2472.8,1369.2 2633.6,1285.8 2794.3,1188.1" fill="none" stroke="#4d50d2" stroke-width="4.2" stroke-linejoin="round" stroke-linecap="round"/><rect x="2142.8" y="1459.0" width="17" height="17" fill="#4d50d2"/><rect x="2303.6" y="1422.9" width="17" height="17" fill="#4d50d2"/><rect x="2464.3" y="1360.7" width="17" height="17" fill="#4d50d2"/><rect x="2625.1" y="1277.3" width="17" height="17" fill="#4d50d2"/><rect x="2785.8" y="1179.6" width="17" height="17" fill="#4d50d2"/><polyline points="2151.3,1479.7 2312.1,1466.3 2472.8,1443.9 2633.6,1415.0 2794.3,1381.8" fill="none" stroke="#f5b400" stroke-width="5.2" stroke-linejoin="round" stroke-linecap="round"/><rect x="2142.8" y="1471.2" width="17" height="17" fill="#f5b400"/><rect x="2303.6" y="1457.8" width="17" height="17" fill="#f5b400"/><rect x="2464.3" y="1435.4" width="17" height="17" fill="#f5b400"/><rect x="2625.1" y="1406.5" width="17" height="17" fill="#f5b400"/><rect x="2785.8" y="1373.3" width="17" height="17" fill="#f5b400"/><polyline points="2151.3,1489.4 2312.1,1489.4 2472.8,1489.4 2633.6,1489.4 2794.3,1489.4" fill="none" stroke="#2db5a3" stroke-width="4.2" stroke-linejoin="round" stroke-linecap="round"/><rect x="2142.8" y="1480.9" width="17" height="17" fill="#2db5a3"/><rect x="2303.6" y="1480.9" width="17" height="17" fill="#2db5a3"/><rect x="2464.3" y="1480.9" width="17" height="17" fill="#2db5a3"/><rect x="2625.1" y="1480.9" width="17" height="17" fill="#2db5a3"/><rect x="2785.8" y="1480.9" width="17" height="17" fill="#2db5a3"/></svg>
<span class="t tahb" style="left:1980.50px;top:843.00px;font-size:21.71px;color:#000;font-weight:bold;transform:scaleX(0.9045);">4,000</span>
<span class="t tahb" style="left:1979.58px;top:923.00px;font-size:21.71px;color:#000;font-weight:bold;transform:scaleX(0.9179);">3,500</span>
<span class="t tahb" style="left:1979.58px;top:1002.00px;font-size:21.71px;color:#000;font-weight:bold;transform:scaleX(0.9179);">3,000</span>
<span class="t tahb" style="left:1979.58px;top:1082.00px;font-size:21.71px;color:#000;font-weight:bold;transform:scaleX(0.9179);">2,500</span>
<span class="t tahb" style="left:1979.58px;top:1161.00px;font-size:21.71px;color:#000;font-weight:bold;transform:scaleX(0.9179);">2,000</span>
<span class="t tahb" style="left:1978.64px;top:1241.00px;font-size:21.71px;color:#000;font-weight:bold;transform:scaleX(0.9317);">1,500</span>
<span class="t tahb" style="left:1978.64px;top:1320.00px;font-size:21.71px;color:#000;font-weight:bold;transform:scaleX(0.9317);">1,000</span>
<span class="t tahb" style="left:1999.96px;top:1400.00px;font-size:21.71px;color:#000;font-weight:bold;transform:scaleX(0.9411);">500</span>
<span class="t tahb" style="left:2034.50px;top:1478.00px;font-size:21.71px;color:#000;font-weight:bold;">-</span>
<span class="t tahb" style="left:2123.16px;top:1508.00px;font-size:21.71px;color:#000;font-weight:bold;transform:scaleX(0.9399);">2026</span>
<span class="t tahb" style="left:2283.91px;top:1508.00px;font-size:21.71px;color:#000;font-weight:bold;transform:scaleX(0.9399);">2027</span>
<span class="t tahb" style="left:2444.66px;top:1508.00px;font-size:21.71px;color:#000;font-weight:bold;transform:scaleX(0.9399);">2028</span>
<span class="t tahb" style="left:2605.41px;top:1508.00px;font-size:21.71px;color:#000;font-weight:bold;transform:scaleX(0.9399);">2029</span>
<span class="t tahb" style="left:2766.18px;top:1508.00px;font-size:21.71px;color:#000;font-weight:bold;transform:scaleX(0.9241);">2030</span>
<div style="left:11px;top:1670.5px;width:2880px;height:48.1px;background:#0a0a0a;"></div>
<svg style="left:43px;top:1682px;" width="16" height="22" viewBox="0 0 16 22"><path d="M11.5 3.5L4 11L11.5 18.5" fill="none" stroke="#e0e0e0" stroke-width="1.7" stroke-linecap="round" stroke-linejoin="round"/></svg>
<svg style="left:91px;top:1682px;" width="16" height="22" viewBox="0 0 16 22"><path d="M4.5 3.5L12 11L4.5 18.5" fill="none" stroke="#e0e0e0" stroke-width="1.7" stroke-linecap="round" stroke-linejoin="round"/></svg>
<svg style="left:136.5px;top:1688.5px;" width="20" height="9" viewBox="0 0 20 9"><circle cx="4" cy="4.5" r="2.3" fill="#e8e8e8"/><circle cx="10.2" cy="4.5" r="2.3" fill="#e8e8e8"/><circle cx="16.4" cy="4.5" r="2.3" fill="#e8e8e8"/></svg>
<div style="left:177.4px;top:1676px;width:88.4px;height:35.7px;background:#ffe95c;border-radius:6px;"></div>
<span class="t tah" style="left:189.63px;top:1687.00px;font-size:19.69px;color:#1c1c1c;transform:scaleX(1.0736);">Payroll</span>
<div style="left:272px;top:1682px;width:1.2px;height:24.5px;background:#5c5c5c;"></div>
<div style="left:279.2px;top:1676px;width:86.8px;height:35.7px;background:#ffe95c;border-radius:6px;"></div>
<span class="t tah" style="left:291.15px;top:1687.00px;font-size:19.69px;color:#1c1c1c;transform:scaleX(1.0479);">CAPEX</span>
<div style="left:372.2px;top:1682px;width:1.2px;height:24.5px;background:#5c5c5c;"></div>
<div style="left:379px;top:1676px;width:112.9px;height:35.7px;background:#ffe95c;border-radius:6px;"></div>
<span class="t tah" style="left:391.31px;top:1687.00px;font-size:19.69px;color:#1c1c1c;transform:scaleX(1.0929);">CapTable</span>
<div style="left:498.1px;top:1682px;width:1.2px;height:24.5px;background:#5c5c5c;"></div>
<div style="left:505.3px;top:1676px;width:89.3px;height:35.7px;background:#ffe95c;border-radius:6px;"></div>
<span class="t tah" style="left:517.15px;top:1687.00px;font-size:19.69px;color:#1c1c1c;transform:scaleX(1.0467);">Capital</span>
<div style="left:600.8px;top:1682px;width:1.2px;height:24.5px;background:#5c5c5c;"></div>
<div style="left:608px;top:1676px;width:42.2px;height:35.7px;background:#4ab2e6;border-radius:6px;"></div>
<span class="t tah" style="left:620.73px;top:1687.00px;font-size:19.69px;color:#1c1c1c;transform:scaleX(0.9658);">IS</span>
<div style="left:656.4px;top:1682px;width:1.2px;height:24.5px;background:#5c5c5c;"></div>
<div style="left:662.7px;top:1676px;width:48.3px;height:35.7px;background:#4ab2e6;border-radius:6px;"></div>
<span class="t tah" style="left:675.08px;top:1687.00px;font-size:19.69px;color:#1c1c1c;transform:scaleX(1.0247);">CF</span>
<div style="left:717.2px;top:1682px;width:1.2px;height:24.5px;background:#5c5c5c;"></div>
<div style="left:724.4px;top:1676px;width:47.6px;height:35.7px;background:#4ab2e6;border-radius:6px;"></div>
<span class="t tah" style="left:736.41px;top:1687.00px;font-size:19.69px;color:#1c1c1c;transform:scaleX(0.9906);">BS</span>
<div style="left:778.2px;top:1682px;width:1.2px;height:24.5px;background:#5c5c5c;"></div>
<div style="left:785.3px;top:1676px;width:114.5px;height:35.7px;background:#4ab2e6;border-radius:6px;"></div>
<span class="t tah" style="left:797.27px;top:1687.00px;font-size:19.69px;color:#1c1c1c;transform:scaleX(1.0271);">Scenarios</span>
<div style="left:906px;top:1682px;width:1.2px;height:24.5px;background:#5c5c5c;"></div>
<div style="left:913px;top:1676px;width:114.6px;height:35.7px;background:#4ab2e6;border-radius:6px;"></div>
<span class="t tah" style="left:926.00px;top:1687.00px;font-size:19.69px;color:#1c1c1c;transform:scaleX(1.0821);">Valuation</span>
<div style="left:1033.8px;top:1682px;width:1.2px;height:24.5px;background:#5c5c5c;"></div>
<div style="left:1041.4px;top:1676px;width:113.6px;height:35.7px;background:#4ab2e6;border-radius:6px;"></div>
<span class="t tah" style="left:1053.76px;top:1687.00px;font-size:19.69px;color:#1c1c1c;transform:scaleX(1.0414);">Summary</span>
<div style="left:1161.2px;top:1682px;width:1.2px;height:24.5px;background:#5c5c5c;"></div>
<div style="left:1168px;top:1676px;width:48px;height:35.7px;background:#4ab2e6;border-radius:6px;"></div>
<span class="t tah" style="left:1180.41px;top:1687.00px;font-size:19.69px;color:#1c1c1c;transform:scaleX(0.9932);">BE</span>
<div style="left:1222.2px;top:1682px;width:1.2px;height:24.5px;background:#5c5c5c;"></div>
<div style="left:1229.3px;top:1676px;width:71.7px;height:35.7px;background:#4ab2e6;border-radius:6px;"></div>
<span class="t tah" style="left:1241.21px;top:1687.00px;font-size:19.69px;color:#1c1c1c;transform:scaleX(1.0880);">ROIC</span>
<div style="left:1307.2px;top:1682px;width:1.2px;height:24.5px;background:#5c5c5c;"></div>
<div style="left:1314px;top:1676px;width:85px;height:35.7px;background:#4ab2e6;border-radius:6px;"></div>
<span class="t tah" style="left:1325.97px;top:1687.00px;font-size:19.69px;color:#1c1c1c;transform:scaleX(1.0323);">Charts</span>
<div style="left:1405.2px;top:1682px;width:1.2px;height:24.5px;background:#5c5c5c;"></div>
<div style="left:1412.3px;top:1676px;width:63.3px;height:35.7px;background:#4ab2e6;border-radius:6px;"></div>
<span class="t tah" style="left:1424.25px;top:1687.00px;font-size:19.69px;color:#1c1c1c;transform:scaleX(1.0503);">KPIs</span>
<div style="left:1481.8px;top:1682px;width:1.2px;height:24.5px;background:#5c5c5c;"></div>
<div style="left:1489px;top:1676px;width:168.5px;height:35.7px;background:#4ab2e6;border-radius:6px;"></div>
<span class="t tah" style="left:1500.15px;top:1687.00px;font-size:19.69px;color:#1c1c1c;transform:scaleX(1.0486);">Sources &amp; Uses</span>
<div style="left:1663.7px;top:1682px;width:1.2px;height:24.5px;background:#5c5c5c;"></div>
<div style="left:1671.3px;top:1676px;width:82.7px;height:35.7px;background:#4ab2e6;border-radius:6px;"></div>
<span class="t tah" style="left:1683.25px;top:1687.00px;font-size:19.69px;color:#1c1c1c;transform:scaleX(1.0464);">Ratios</span>
<div style="left:1760.2px;top:1682px;width:1.2px;height:24.5px;background:#5c5c5c;"></div>
<div style="left:1767px;top:1676px;width:96.2px;height:35.7px;background:#4ab2e6;border-radius:6px;"></div>
<span class="t tah" style="left:1779.30px;top:1687.00px;font-size:19.69px;color:#1c1c1c;transform:scaleX(1.0968);">DuPont</span>
<div style="left:1869.4px;top:1682px;width:1.2px;height:24.5px;background:#5c5c5c;"></div>
<div style="left:1869.6px;top:1669px;width:164.4px;height:8.5px;background:#fff;"></div>
<div style="left:1866px;top:1670.4px;width:10.6px;height:9.6px;background:#0a0a0a;border-radius:0 7px 0 0;"></div>
<div style="left:2027px;top:1670.4px;width:10.6px;height:9.6px;background:#0a0a0a;border-radius:7px 0 0 0;"></div>
<div style="left:1876.6px;top:1669px;width:150.4px;height:42.7px;background:linear-gradient(180deg,#fff 0,#fff 35%,#cfe5f4 100%);border-radius:0 0 8px 8px;"></div>
<span class="t tah" style="left:1889.29px;top:1682.00px;font-size:19.69px;color:#1c1c1c;transform:scaleX(1.0947);">Top_Revenue</span>
<div style="left:1888px;top:1704.4px;width:127px;height:2.8px;background:#1e8449;"></div>
<div style="left:2033px;top:1682px;width:1.2px;height:24.5px;background:#5c5c5c;"></div>
<div style="left:2040.3px;top:1676px;width:31.5px;height:35.7px;background:#4ab2e6;border-radius:6px 0 0 6px;overflow:hidden;"></div>
<span class="t tah" style="left:2055.14px;top:1687.00px;font-size:19.69px;color:#1c1c1c;transform:scaleX(1.1370);">To</span>
<div style="left:2071.8px;top:1672px;width:143.2px;height:44px;background:#0a0a0a;"></div>
<svg style="left:2085px;top:1688.5px;" width="20" height="9" viewBox="0 0 20 9"><circle cx="4" cy="4.5" r="2.3" fill="#e8e8e8"/><circle cx="10.2" cy="4.5" r="2.3" fill="#e8e8e8"/><circle cx="16.4" cy="4.5" r="2.3" fill="#e8e8e8"/></svg>
<svg style="left:2133px;top:1682px;" width="22" height="22" viewBox="0 0 22 22"><path d="M11 2.5V19.5M2.5 11H19.5" stroke="#e0e0e0" stroke-width="1.6" stroke-linecap="round"/></svg>
<svg style="left:2188px;top:1685px;" width="8" height="20" viewBox="0 0 8 20"><rect x="1.6" y="1.5" width="4.2" height="4" fill="#e8e8e8"/><rect x="1.6" y="8" width="4.2" height="4" fill="#e8e8e8"/><rect x="1.6" y="14.5" width="4.2" height="4" fill="#e8e8e8"/></svg>
<div style="left:2217px;top:1681px;width:643px;height:24.5px;background:#141414;border-radius:12px;"></div>
<svg style="left:2222px;top:1685px;" width="14" height="17" viewBox="0 0 14 17"><path d="M11.5 2.5L3 8.5L11.5 14.5Z" fill="#9a9a9a" stroke="#9a9a9a" stroke-width="1.4" stroke-linejoin="round"/></svg>
<div style="left:2241.6px;top:1687px;width:504.4px;height:12.3px;background:#9c9c9c;border-radius:6px;"></div>
<svg style="left:2839.5px;top:1685px;" width="14" height="17" viewBox="0 0 14 17"><path d="M2.5 2.5L11 8.5L2.5 14.5Z" fill="#9a9a9a" stroke="#9a9a9a" stroke-width="1.4" stroke-linejoin="round"/></svg>
<div style="left:11px;top:1718.6px;width:2880px;height:32.4px;background:#141414;"></div>
<div style="left:11px;top:1718.2px;width:2880px;height:1px;background:#2a2a2a;"></div>
<span class="t" style="left:26.46px;top:1728.00px;font-size:15.6px;color:#e8e8e8;transform:scaleX(0.9395);">Ready</span>
<svg style="left:99px;top:1726px;" width="23" height="20" viewBox="0 0 23 20"><path d="M1.5 1.5H20.5V7 M1.5 1.5V18H9 M1.5 5.5H20.5 M4.5 9.5H9.5 M4.5 13.5H8" fill="none" stroke="#e0e0e0" stroke-width="1.5"/><circle cx="15.5" cy="13.3" r="5.3" fill="none" stroke="#e0e0e0" stroke-width="1.5"/><circle cx="15.5" cy="13.3" r="2" fill="#e0e0e0"/></svg>
<svg style="left:145px;top:1724px;" width="24" height="24" viewBox="0 0 24 24"><circle cx="9.5" cy="3.6" r="2.4" fill="none" stroke="#e0e0e0" stroke-width="1.4"/><path d="M2 8.2L7 9.8V14L4.5 21 M17 8.2L12 9.8V13 M7 9.8H12 M9.5 14L11 17" fill="none" stroke="#e0e0e0" stroke-width="1.5" stroke-linecap="round" stroke-linejoin="round"/><path d="M13.5 14.5L21.5 22.5M21.5 14.5L13.5 22.5" stroke="#e0e0e0" stroke-width="1.6" stroke-linecap="round"/></svg>
<span class="t" style="left:173.50px;top:1728.00px;font-size:15.6px;color:#f0f0f0;font-weight:bold;">Accessibility: Investigate</span>
<div style="left:2445px;top:1719px;width:59.7px;height:32px;background:#242424;"></div>
<svg style="left:2463.5px;top:1724px;" width="22" height="21" viewBox="0 0 22 21"><path d="M1.5 1.5H20V19.5H1.5Z M1.5 7.5H20 M1.5 13.5H20 M7.7 1.5V19.5 M13.8 1.5V19.5" fill="none" stroke="#f4f4f4" stroke-width="2"/></svg>
<svg style="left:2523px;top:1724px;" width="23" height="21" viewBox="0 0 23 21"><path d="M1.5 1.5H21V19.5H1.5Z" fill="none" stroke="#f4f4f4" stroke-width="2"/><path d="M6 5.5H16.5V16H6Z M8.5 8.8H14 M8.5 12.5H14" fill="none" stroke="#f0f0f0" stroke-width="1.4"/></svg>
<svg style="left:2583.5px;top:1724px;" width="23" height="21" viewBox="0 0 23 21"><path d="M1.5 1.5H21V19.5H1.5Z M6.5 1.5V11.5H14.5V1.5 M1.5 11.5H6.5" fill="none" stroke="#f4f4f4" stroke-width="2"/></svg>
<div style="left:2633.5px;top:1734px;width:10.5px;height:1.4px;background:#e0e0e0;"></div>
<div style="left:2653px;top:1733.6px;width:148px;height:2px;background:#b8b8b8;"></div>
<div style="left:2726px;top:1729.5px;width:2px;height:10px;background:#b8b8b8;"></div>
<div style="left:2732.6px;top:1726.5px;width:8px;height:16.6px;background:#c4c4c4;"></div>
<svg style="left:2808px;top:1727px;" width="14" height="14" viewBox="0 0 14 14"><path d="M7 1.5V12.5M1.5 7H12.5" stroke="#e0e0e0" stroke-width="1.4"/></svg>
<span class="t" style="left:2839.31px;top:1728.00px;font-size:15.6px;color:#e8e8e8;transform:scaleX(0.9867);">140%</span>
</div></body></html>
